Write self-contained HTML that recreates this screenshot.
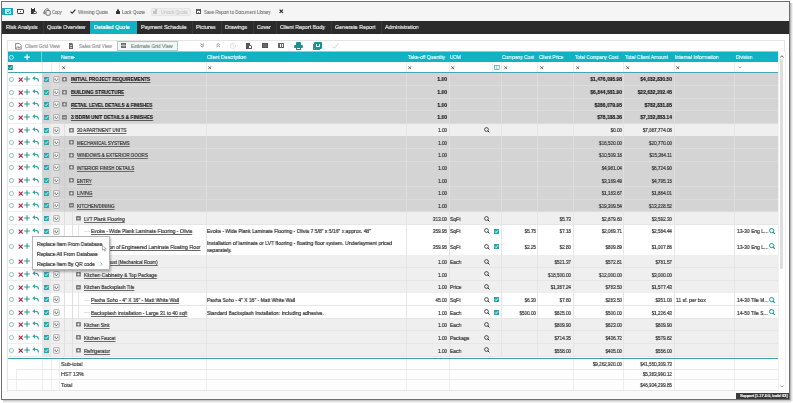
<!DOCTYPE html><html><head><meta charset="utf-8"><style>
html,body{margin:0;padding:0;background:#fff;width:793px;height:403px;overflow:hidden;position:relative;font-family:"Liberation Sans",sans-serif}
div{position:absolute;box-sizing:border-box}
.t{white-space:nowrap;line-height:8px;height:8px;will-change:transform;-webkit-text-stroke:0.22px currentColor}
svg{position:absolute;overflow:visible}
</style></head><body>
<div style="left:790px;top:3px;width:3px;height:398px;background:linear-gradient(90deg,#a8a8a8,#e6e6e6 60%,#fafafa)"></div>
<div style="left:3px;top:400px;width:788px;height:3px;background:linear-gradient(180deg,#bdbdbd,#e8e8e8 60%,#fafafa)"></div>
<div style="left:1px;top:1px;width:789px;height:399px;border:1px solid #6f6f6f;background:#fff"></div>
<div style="left:2px;top:2px;width:787px;height:19.5px;background:#f5f5f5"></div>
<div style="left:2px;top:21.2px;width:787px;height:12.6px;background:#2b2b2b"></div>
<div style="left:2px;top:8px;width:11.4px;height:7.1px;background:#17a9b5"></div>
<div style="left:5.2px;top:9.2px;width:5.6px;height:4.6px;background:#8ff0f6;border:0.5px solid #c9fbff"></div>
<svg style="left:5.6px;top:9.6px" width="5" height="4" viewBox="0 0 5 4"><path d="M0.9 1.8 L2.3 3.2 L4.4 0.6" stroke="#0f8c98" stroke-width="1" fill="none"/></svg>
<div style="left:16.9px;top:8.8px;width:6.8px;height:5.1px;border:0.9px solid #333;border-radius:1.2px;background:#fff"></div>
<div style="left:17.4px;top:9.2px;width:5.8px;height:1.3px;background:#444"></div>
<div style="left:19.8px;top:11.1px;width:1.3px;height:1.2px;background:#222;border-radius:1px"></div>
<div style="left:30.8px;top:8.3px;width:3.8px;height:5.8px;background:#333;border-radius:0.5px"></div>
<div style="left:32.0px;top:8.0px;width:1.6px;height:1.0px;background:#fff"></div>
<div style="left:32.9px;top:10.6px;width:4.1px;height:3.9px;border:0.8px solid #444;background:#fff;border-radius:0 1.8px 1.5px 1.5px"></div>
<svg style="left:43px;top:7.6px" width="8" height="8" viewBox="0 0 8 8"><rect x="2.9" y="2.6" width="4.3" height="4.6" rx="1" fill="none" stroke="#555" stroke-width="0.85"/><path d="M1.1 5.6 Q0.4 2.0 3.6 0.9 Q5.2 0.5 5.9 1.6" stroke="#555" stroke-width="0.85" fill="none"/><path d="M0.6 4.3 L1.2 6.0 L2.5 4.9" stroke="#555" stroke-width="0.7" fill="none"/></svg>
<div class="t" style="left:52px;top:8.094px;font-size:5.5px;color:#6a6a6a;font-weight:normal;transform:scaleX(0.757);transform-origin:0 0;-webkit-text-stroke:0.08px currentColor">Copy</div>
<svg style="left:69.8px;top:9.2px" width="6" height="5" viewBox="0 0 6 5"><path d="M0.5 2.6 L2.2 4.2 L5.4 0.6" stroke="#333" stroke-width="1.2" fill="none"/></svg>
<div class="t" style="left:77.8px;top:8.094px;font-size:5.5px;color:#6a6a6a;font-weight:normal;transform:scaleX(0.827);transform-origin:0 0;-webkit-text-stroke:0.08px currentColor">Winning Quote</div>
<div style="left:116.1px;top:11px;width:4px;height:3.4px;background:#333;border-radius:0.5px"></div>
<div style="left:116.8px;top:8.7px;width:2.6px;height:3.4px;border:0.8px solid #333;border-radius:1.5px 1.5px 0 0"></div>
<div class="t" style="left:122.2px;top:8.094px;font-size:5.5px;color:#6a6a6a;font-weight:normal;transform:scaleX(0.826);transform-origin:0 0;-webkit-text-stroke:0.08px currentColor">Lock Quote</div>
<div style="left:151px;top:7.6px;width:39.5px;height:8.8px;background:#eeeeee;border-radius:2px;border:0.8px solid #e6e6e6"></div>
<div style="left:153.3px;top:11.2px;width:3.8px;height:3.2px;background:#c4c4c4"></div>
<div style="left:154.6px;top:9px;width:2.6px;height:2.8px;border:0.7px solid #c4c4c4;border-radius:1.5px 1.5px 0 0;border-bottom:none"></div>
<div class="t" style="left:160.8px;top:8.094px;font-size:5.5px;color:#c2c2c2;font-weight:normal;transform:scaleX(0.8);transform-origin:0 0;-webkit-text-stroke:0.08px currentColor">Unlock Quote</div>
<div style="left:196px;top:8.6px;width:5px;height:5.6px;border:0.9px solid #555;background:#fff"></div>
<div style="left:197.2px;top:9px;width:2.6px;height:1.8px;background:#666"></div>
<div style="left:197.6px;top:12px;width:1.8px;height:1.4px;background:#888"></div>
<div class="t" style="left:203.5px;top:8.094px;font-size:5.5px;color:#6a6a6a;font-weight:normal;transform:scaleX(0.817);transform-origin:0 0;-webkit-text-stroke:0.08px currentColor">Save Report to Document Library</div>
<svg style="left:278.6px;top:9.4px" width="5" height="5" viewBox="0 0 5 5"><path d="M0.6 0.6 L3.9 3.9 M3.9 0.6 L0.6 3.9" stroke="#222" stroke-width="1.1"/></svg>
<div style="left:90.4px;top:21.4px;width:46.5px;height:12.4px;background:#10b2c4"></div>
<div style="left:43px;top:21.4px;width:0.8px;height:12.4px;background:#383838"></div>
<div class="t" style="left:5.8px;top:23.156px;font-size:5.9px;color:#e6e6e6;font-weight:normal;transform:scaleX(0.912);transform-origin:0 0;">Risk Analysis</div>
<div class="t" style="left:46.7px;top:23.156px;font-size:5.9px;color:#e6e6e6;font-weight:normal;transform:scaleX(0.907);transform-origin:0 0;">Quote Overview</div>
<div class="t" style="left:94.3px;top:23.156px;font-size:5.9px;color:#ffffff;font-weight:normal;transform:scaleX(0.913);transform-origin:0 0;">Detailed Quote</div>
<div style="left:192.4px;top:21.4px;width:0.8px;height:12.4px;background:#383838"></div>
<div class="t" style="left:140.7px;top:23.156px;font-size:5.9px;color:#e6e6e6;font-weight:normal;transform:scaleX(0.922);transform-origin:0 0;">Payment Schedule</div>
<div style="left:221px;top:21.4px;width:0.8px;height:12.4px;background:#383838"></div>
<div class="t" style="left:195.6px;top:23.156px;font-size:5.9px;color:#e6e6e6;font-weight:normal;transform:scaleX(0.924);transform-origin:0 0;">Pictures</div>
<div style="left:252.9px;top:21.4px;width:0.8px;height:12.4px;background:#383838"></div>
<div class="t" style="left:224.9px;top:23.156px;font-size:5.9px;color:#e6e6e6;font-weight:normal;transform:scaleX(0.904);transform-origin:0 0;">Drawings</div>
<div style="left:276.2px;top:21.4px;width:0.8px;height:12.4px;background:#383838"></div>
<div class="t" style="left:256.7px;top:23.156px;font-size:5.9px;color:#e6e6e6;font-weight:normal;transform:scaleX(0.871);transform-origin:0 0;">Cover</div>
<div style="left:330.8px;top:21.4px;width:0.8px;height:12.4px;background:#383838"></div>
<div class="t" style="left:280.4px;top:23.156px;font-size:5.9px;color:#e6e6e6;font-weight:normal;transform:scaleX(0.908);transform-origin:0 0;">Client Report Body</div>
<div style="left:381px;top:21.4px;width:0.8px;height:12.4px;background:#383838"></div>
<div class="t" style="left:335.2px;top:23.156px;font-size:5.9px;color:#e6e6e6;font-weight:normal;transform:scaleX(0.921);transform-origin:0 0;">Generate Report</div>
<div class="t" style="left:385.2px;top:23.156px;font-size:5.9px;color:#e6e6e6;font-weight:normal;transform:scaleX(0.906);transform-origin:0 0;">Administration</div>
<div style="left:7.2px;top:40.2px;width:778px;height:11.4px;border-top:0.8px solid #e4e4e4;border-left:0.8px solid #e4e4e4;border-right:0.8px solid #e4e4e4;background:#fff"></div>
<svg style="left:14.6px;top:42.6px" width="7" height="7" viewBox="0 0 7 7"><path d="M0.6 0.5 H4.2 L6.2 2.5 V6.2 H0.6 Z" fill="#fff" stroke="#666" stroke-width="0.75"/><path d="M1.2 5.6 L2.8 3.6 L4.2 4.9 L5.6 3.9" stroke="#555" stroke-width="0.8" fill="none"/></svg>
<div class="t" style="left:25.3px;top:41.994px;font-size:5.5px;color:#9a9a9a;font-weight:normal;transform:scaleX(0.89);transform-origin:0 0;">Client Grid View</div>
<div style="left:68.6px;top:43px;width:4.6px;height:5.8px;background:#666;border-radius:0 1.5px 0 0"></div>
<div style="left:69.6px;top:45.2px;width:2.6px;height:0.6px;background:#ccc"></div>
<div style="left:69.6px;top:46.6px;width:2.6px;height:0.6px;background:#ccc"></div>
<div class="t" style="left:79.2px;top:41.994px;font-size:5.5px;color:#9a9a9a;font-weight:normal;transform:scaleX(0.839);transform-origin:0 0;">Sales Grid View</div>
<div style="left:117.4px;top:40.8px;width:60.6px;height:10.6px;border:0.9px solid #a9cbc2;background:#f2f7f6"></div>
<div style="left:120.6px;top:43.2px;width:5.9px;height:5.2px;background:#8c8c8c;border:0.6px solid #6c6c6c"></div>
<div style="left:121.4px;top:44.8px;width:4.3px;height:0.5px;background:#bbb"></div>
<div class="t" style="left:131.2px;top:41.994px;font-size:5.5px;color:#8c8c8c;font-weight:normal;transform:scaleX(0.892);transform-origin:0 0;">Estimate Grid View</div>
<svg style="left:199.6px;top:43.3px" width="5" height="5" viewBox="0 0 5 5"><path d="M0.5 0.5 L2.2 2 L3.9 0.5 M0.5 2.5 L2.2 4 L3.9 2.5" stroke="#777" stroke-width="0.9" fill="none"/></svg>
<svg style="left:215.8px;top:43.3px" width="5" height="5" viewBox="0 0 5 5"><path d="M0.5 4 L2.2 2.5 L3.9 4 M0.5 2 L2.2 0.5 L3.9 2" stroke="#888" stroke-width="0.9" fill="none"/></svg>
<svg style="left:230.4px;top:42.6px" width="6" height="6" viewBox="0 0 6 6"><circle cx="3" cy="3" r="2.5" fill="none" stroke="#d8d8d8" stroke-width="0.8"/><path d="M3 1.5 L3 3 L4.2 3.8" stroke="#d8d8d8" stroke-width="0.7" fill="none"/></svg>
<div style="left:246.2px;top:43px;width:3.5px;height:5.6px;background:#555"></div>
<div style="left:248.2px;top:45px;width:3.8px;height:4px;border:0.8px solid #555;background:#fff;border-radius:0 1.2px 0 0"></div>
<div style="left:262px;top:43.3px;width:6px;height:5.2px;border:0.9px solid #555;border-top-width:1.6px;background:#6a6a6a"></div>
<div style="left:277.5px;top:43.3px;width:6px;height:5.2px;border:0.9px solid #666;border-top-width:1.6px;background:repeating-linear-gradient(90deg,#666 0 0.8px,#fff 0.8px 2px)"></div>
<div style="left:294px;top:44.6px;width:8.8px;height:3.8px;background:#16928f;border-radius:1.2px"></div>
<div style="left:295.8px;top:42.4px;width:5.2px;height:2.4px;background:#16928f;border-radius:1px 1px 0 0"></div>
<div style="left:296.2px;top:47.2px;width:4.4px;height:2.6px;background:#fff;border:0.8px solid #16928f"></div>
<div style="left:313px;top:43.6px;width:6.5px;height:6.8px;border-left:0.8px solid #777;border-bottom:0.8px solid #777"></div>
<div style="left:314.4px;top:42px;width:7.6px;height:7px;background:#169494;border-radius:1px"></div>
<div style="left:316px;top:44.2px;width:4.4px;height:2.8px;border:0.8px solid #dff;border-top:none"></div>
<svg style="left:332px;top:43px" width="7" height="6" viewBox="0 0 7 6"><path d="M0.5 3.5 L2.3 5.2 L6.3 0.6" stroke="#ccc" stroke-width="0.9" fill="none"/></svg>
<div style="left:8px;top:52px;width:769.6px;height:9.6px;background:#10b2c4"></div>
<div style="left:8px;top:51px;width:769.6px;height:1px;background:rgba(16,178,196,0.55)"></div>
<div style="left:41.2px;top:52px;width:0.8px;height:10px;background:#6ad8e3"></div>
<svg style="left:9.3px;top:54.8px" width="5" height="5" viewBox="0 0 5 5"><circle cx="2.4" cy="2.4" r="2" fill="none" stroke="#d5fbff" stroke-width="0.8"/></svg>
<svg style="left:23.9px;top:53.6px" width="7" height="7" viewBox="0 0 7 7"><path d="M3.1 0.2 V6 M0.2 3.1 H6" stroke="#f4ffff" stroke-width="1.2"/></svg>
<div class="t" style="left:60.8px;top:53.025px;font-size:5.7px;color:#e4fcff;font-weight:normal;transform:scaleX(0.856);transform-origin:0 0;-webkit-text-stroke:0.2px #e4fcff">Name</div>
<div class="t" style="left:207px;top:53.025px;font-size:5.7px;color:#e4fcff;font-weight:normal;transform:scaleX(0.876);transform-origin:0 0;-webkit-text-stroke:0.2px #e4fcff">Client Description</div>
<div class="t" style="left:407.7px;top:53.025px;font-size:5.7px;color:#e4fcff;font-weight:normal;transform:scaleX(0.867);transform-origin:0 0;-webkit-text-stroke:0.2px #e4fcff">Take-off Quantity</div>
<div class="t" style="left:450.2px;top:53.025px;font-size:5.7px;color:#e4fcff;font-weight:normal;transform:scaleX(0.823);transform-origin:0 0;-webkit-text-stroke:0.2px #e4fcff">UOM</div>
<div class="t" style="left:502.2px;top:53.025px;font-size:5.7px;color:#e4fcff;font-weight:normal;transform:scaleX(0.853);transform-origin:0 0;-webkit-text-stroke:0.2px #e4fcff">Company Cost</div>
<div class="t" style="left:538.6px;top:53.025px;font-size:5.7px;color:#e4fcff;font-weight:normal;transform:scaleX(0.838);transform-origin:0 0;-webkit-text-stroke:0.2px #e4fcff">Client Price</div>
<div class="t" style="left:574.6px;top:53.025px;font-size:5.7px;color:#e4fcff;font-weight:normal;transform:scaleX(0.847);transform-origin:0 0;-webkit-text-stroke:0.2px #e4fcff">Total Company Cost</div>
<div class="t" style="left:625px;top:53.025px;font-size:5.7px;color:#e4fcff;font-weight:normal;transform:scaleX(0.878);transform-origin:0 0;-webkit-text-stroke:0.2px #e4fcff">Total Client Amount</div>
<div class="t" style="left:674.8px;top:53.025px;font-size:5.7px;color:#e4fcff;font-weight:normal;transform:scaleX(0.891);transform-origin:0 0;-webkit-text-stroke:0.2px #e4fcff">Internal Information</div>
<div class="t" style="left:736px;top:53.025px;font-size:5.7px;color:#e4fcff;font-weight:normal;transform:scaleX(0.821);transform-origin:0 0;-webkit-text-stroke:0.2px #e4fcff">Division</div>
<div style="left:73.4px;top:57.0px;width:1.9px;height:0.8px;background:#e4fcff"></div>
<div style="left:8px;top:61.5px;width:769.6px;height:10.8px;background:#fff"></div>
<div style="left:41.5px;top:61.5px;width:0.7px;height:10.8px;background:#ececec"></div>
<div style="left:50.6px;top:61.5px;width:0.7px;height:10.8px;background:#ececec"></div>
<div style="left:59.3px;top:61.5px;width:0.7px;height:10.8px;background:#ececec"></div>
<div style="left:205.5px;top:61.5px;width:0.7px;height:10.8px;background:#ececec"></div>
<div style="left:405.9px;top:61.5px;width:0.7px;height:10.8px;background:#ececec"></div>
<div style="left:448.7px;top:61.5px;width:0.7px;height:10.8px;background:#ececec"></div>
<div style="left:492.3px;top:61.5px;width:0.7px;height:10.8px;background:#ececec"></div>
<div style="left:501px;top:61.5px;width:0.7px;height:10.8px;background:#ececec"></div>
<div style="left:537.4px;top:61.5px;width:0.7px;height:10.8px;background:#ececec"></div>
<div style="left:572.5px;top:61.5px;width:0.7px;height:10.8px;background:#ececec"></div>
<div style="left:623.1px;top:61.5px;width:0.7px;height:10.8px;background:#ececec"></div>
<div style="left:673.8px;top:61.5px;width:0.7px;height:10.8px;background:#ececec"></div>
<div style="left:734.2px;top:61.5px;width:0.7px;height:10.8px;background:#ececec"></div>
<svg style="left:8.4px;top:64.9px" width="5" height="5" viewBox="0 0 5 5"><rect x="0" y="0" width="4.8" height="5" fill="#178f96"/><path d="M1.0 2.5 L2.1 3.6 L4.0 1.3" stroke="#bff8ff" stroke-width="0.9" fill="none"/></svg>
<svg style="left:62.3px;top:65.6px" width="4" height="4" viewBox="0 0 4 4"><path d="M0.3 0.3 L3.1 3.1 M3.1 0.3 L0.3 3.1" stroke="#444" stroke-width="0.8"/></svg>
<svg style="left:207.9px;top:65.6px" width="4" height="4" viewBox="0 0 4 4"><path d="M0.3 0.3 L3.1 3.1 M3.1 0.3 L0.3 3.1" stroke="#444" stroke-width="0.8"/></svg>
<svg style="left:407.9px;top:65.6px" width="4" height="4" viewBox="0 0 4 4"><path d="M0.3 0.3 L3.1 3.1 M3.1 0.3 L0.3 3.1" stroke="#444" stroke-width="0.8"/></svg>
<svg style="left:450.9px;top:65.6px" width="4" height="4" viewBox="0 0 4 4"><path d="M0.3 0.3 L3.1 3.1 M3.1 0.3 L0.3 3.1" stroke="#444" stroke-width="0.8"/></svg>
<svg style="left:503.6px;top:65.6px" width="4" height="4" viewBox="0 0 4 4"><path d="M0.3 0.3 L3.1 3.1 M3.1 0.3 L0.3 3.1" stroke="#444" stroke-width="0.8"/></svg>
<svg style="left:539.9px;top:65.6px" width="4" height="4" viewBox="0 0 4 4"><path d="M0.3 0.3 L3.1 3.1 M3.1 0.3 L0.3 3.1" stroke="#444" stroke-width="0.8"/></svg>
<svg style="left:575.9px;top:65.6px" width="4" height="4" viewBox="0 0 4 4"><path d="M0.3 0.3 L3.1 3.1 M3.1 0.3 L0.3 3.1" stroke="#444" stroke-width="0.8"/></svg>
<svg style="left:626.2px;top:65.6px" width="4" height="4" viewBox="0 0 4 4"><path d="M0.3 0.3 L3.1 3.1 M3.1 0.3 L0.3 3.1" stroke="#444" stroke-width="0.8"/></svg>
<svg style="left:675.9px;top:65.6px" width="4" height="4" viewBox="0 0 4 4"><path d="M0.3 0.3 L3.1 3.1 M3.1 0.3 L0.3 3.1" stroke="#444" stroke-width="0.8"/></svg>
<svg style="left:494px;top:65.2px" width="6" height="5" viewBox="0 0 6 5"><rect x="0.4" y="0.4" width="4.8" height="4" fill="none" stroke="#3aa" stroke-width="0.7"/><path d="M2.8 0.4 V4.4" stroke="#3aa" stroke-width="0.6"/></svg>
<svg style="left:737.5px;top:65.6px" width="4" height="3" viewBox="0 0 4 3"><path d="M0.3 0.5 L1.8 2 L3.3 0.5" stroke="#666" stroke-width="0.6" fill="none"/></svg>
<div style="left:8px;top:72.3px;width:769.6px;height:1px;background:#4aa3b0"></div>
<div style="left:777.6px;top:52px;width:7.4px;height:339px;background:#fff"></div>
<svg style="left:779.6px;top:54.6px" width="4" height="3" viewBox="0 0 4 3"><path d="M0.3 2.5 L1.9 0.7 L3.5 2.5" stroke="#444" stroke-width="0.85" fill="none"/></svg>
<div style="left:780.2px;top:59.2px;width:2.8px;height:210.3px;background:#dedede;border-radius:1px"></div>
<div style="left:777.6px;top:52px;width:0.7px;height:339px;background:#f0f0f0"></div>
<div style="left:785px;top:52px;width:0.7px;height:339px;background:#f0f0f0"></div>
<svg style="left:779.7px;top:385.2px" width="4" height="3" viewBox="0 0 4 3"><path d="M0.3 0.5 L1.9 2.1 L3.5 0.5" stroke="#777" stroke-width="0.7" fill="none"/></svg>
<div style="left:8px;top:73.3px;width:33.5px;height:12.62px;background:#fff"></div>
<div style="left:41.5px;top:73.3px;width:736.1px;height:12.62px;background:#d4d4d4"></div>
<div style="left:50.6px;top:73.3px;width:8.7px;height:12.62px;background:#dcdcdc"></div>
<div style="left:8px;top:85.22px;width:33.5px;height:0.7px;background:#eeeeee"></div>
<div style="left:41.5px;top:85.22px;width:736.1px;height:0.7px;background:#dcdcdc"></div>
<div style="left:205.5px;top:73.3px;width:0.7px;height:12.62px;background:#dedede"></div>
<div style="left:405.9px;top:73.3px;width:0.7px;height:12.62px;background:#dedede"></div>
<div style="left:448.7px;top:73.3px;width:0.7px;height:12.62px;background:#dedede"></div>
<div style="left:501px;top:73.3px;width:0.7px;height:12.62px;background:#dedede"></div>
<div style="left:537.4px;top:73.3px;width:0.7px;height:12.62px;background:#dedede"></div>
<div style="left:572.5px;top:73.3px;width:0.7px;height:12.62px;background:#dedede"></div>
<div style="left:623.1px;top:73.3px;width:0.7px;height:12.62px;background:#dedede"></div>
<div style="left:673.8px;top:73.3px;width:0.7px;height:12.62px;background:#dedede"></div>
<div style="left:734.2px;top:73.3px;width:0.7px;height:12.62px;background:#dedede"></div>
<svg style="left:9.1px;top:77px" width="6" height="6" viewBox="0 0 6 6"><circle cx="2.5" cy="2.5" r="2.1" fill="none" stroke="#4f9d94" stroke-width="0.6"/></svg>
<svg style="left:17.6px;top:77px" width="6" height="6" viewBox="0 0 6 6"><path d="M0.7 0.7 L4.7 4.7 M4.7 0.7 L0.7 4.7" stroke="#a8173b" stroke-width="1.05"/></svg>
<svg style="left:23.9px;top:76.4px" width="7" height="7" viewBox="0 0 7 7"><path d="M3 0.3 V5.8 M0.2 3.05 H5.8" stroke="#2c9a8b" stroke-width="1.1"/></svg>
<svg style="left:32.3px;top:76.4px" width="7" height="6" viewBox="0 0 7 6"><path d="M2.9 0.2 L0.3 2.3 L2.9 4.4 Z" fill="#2a9f95"/><path d="M2.3 2.3 H3.9 Q6.4 2.3 6.4 5.5" stroke="#2a9f95" stroke-width="1.05" fill="none"/></svg>
<svg style="left:44px;top:76.8px" width="5" height="5" viewBox="0 0 5 5"><rect x="0" y="0" width="4.9" height="5" fill="#22a9ad"/><path d="M1.0 2.5 L2.1 3.6 L4.0 1.3" stroke="#ffffff" stroke-width="0.9" fill="none"/></svg>
<svg style="left:53px;top:76px" width="7" height="7" viewBox="0 0 7 7"><rect x="0.7" y="0.7" width="5.4" height="5.6" rx="0.4" fill="#fff" stroke="#8c8c8c" stroke-width="0.7"/><path d="M2.3 2.4 A1.3 1.3 0 1 0 4.5 2.6" stroke="#3a3a3a" stroke-width="0.75" fill="none"/></svg>
<svg style="left:62.3px;top:77.1px" width="5" height="5" viewBox="0 0 5 5"><rect x="0" y="0" width="4.9" height="4.6" rx="0.6" fill="#7c7c7c"/><path d="M1.2 2.3 H3.7" stroke="#eee" stroke-width="0.8"/><path d="M2.45 1.1 V3.5" stroke="#eee" stroke-width="0.8"/></svg>
<div style="left:59.3px;top:73.3px;width:146px;height:12.62px;overflow:hidden">
<div class="t" style="left:11.4px;top:2.104px;font-size:5.5px;color:#141414;font-weight:bold;transform:scaleX(0.856);transform-origin:0 0;-webkit-text-stroke:0.14px currentColor;text-decoration:underline;text-underline-offset:0.5px;text-decoration-thickness:0.5px;text-decoration-color:#555">INITIAL PROJECT REQUIREMENTS</div>
</div>
<div class="t" style="left:47.3px;top:75.404px;width:400px;text-align:right;font-size:5.5px;color:#141414;font-weight:bold;transform:scaleX(0.899);transform-origin:100% 0;-webkit-text-stroke:0.14px currentColor;">1.00</div>
<div class="t" style="left:221.8px;top:75.404px;width:400px;text-align:right;font-size:5.5px;color:#141414;font-weight:bold;transform:scaleX(0.899);transform-origin:100% 0;-webkit-text-stroke:0.14px currentColor;">$1,476,095.98</div>
<div class="t" style="left:272px;top:75.404px;width:400px;text-align:right;font-size:5.5px;color:#141414;font-weight:bold;transform:scaleX(0.899);transform-origin:100% 0;-webkit-text-stroke:0.14px currentColor;">$4,032,830.50</div>
<div style="left:8px;top:85.92px;width:33.5px;height:12.62px;background:#fff"></div>
<div style="left:41.5px;top:85.92px;width:736.1px;height:12.62px;background:#d4d4d4"></div>
<div style="left:50.6px;top:85.92px;width:8.7px;height:12.62px;background:#dcdcdc"></div>
<div style="left:8px;top:97.84px;width:33.5px;height:0.7px;background:#eeeeee"></div>
<div style="left:41.5px;top:97.84px;width:736.1px;height:0.7px;background:#dcdcdc"></div>
<div style="left:205.5px;top:85.92px;width:0.7px;height:12.62px;background:#dedede"></div>
<div style="left:405.9px;top:85.92px;width:0.7px;height:12.62px;background:#dedede"></div>
<div style="left:448.7px;top:85.92px;width:0.7px;height:12.62px;background:#dedede"></div>
<div style="left:501px;top:85.92px;width:0.7px;height:12.62px;background:#dedede"></div>
<div style="left:537.4px;top:85.92px;width:0.7px;height:12.62px;background:#dedede"></div>
<div style="left:572.5px;top:85.92px;width:0.7px;height:12.62px;background:#dedede"></div>
<div style="left:623.1px;top:85.92px;width:0.7px;height:12.62px;background:#dedede"></div>
<div style="left:673.8px;top:85.92px;width:0.7px;height:12.62px;background:#dedede"></div>
<div style="left:734.2px;top:85.92px;width:0.7px;height:12.62px;background:#dedede"></div>
<svg style="left:9.1px;top:90px" width="6" height="6" viewBox="0 0 6 6"><circle cx="2.5" cy="2.5" r="2.1" fill="none" stroke="#4f9d94" stroke-width="0.6"/></svg>
<svg style="left:17.6px;top:90px" width="6" height="6" viewBox="0 0 6 6"><path d="M0.7 0.7 L4.7 4.7 M4.7 0.7 L0.7 4.7" stroke="#a8173b" stroke-width="1.05"/></svg>
<svg style="left:23.9px;top:89.4px" width="7" height="7" viewBox="0 0 7 7"><path d="M3 0.3 V5.8 M0.2 3.05 H5.8" stroke="#2c9a8b" stroke-width="1.1"/></svg>
<svg style="left:32.3px;top:89.4px" width="7" height="6" viewBox="0 0 7 6"><path d="M2.9 0.2 L0.3 2.3 L2.9 4.4 Z" fill="#2a9f95"/><path d="M2.3 2.3 H3.9 Q6.4 2.3 6.4 5.5" stroke="#2a9f95" stroke-width="1.05" fill="none"/></svg>
<svg style="left:44px;top:89.8px" width="5" height="5" viewBox="0 0 5 5"><rect x="0" y="0" width="4.9" height="5" fill="#22a9ad"/><path d="M1.0 2.5 L2.1 3.6 L4.0 1.3" stroke="#ffffff" stroke-width="0.9" fill="none"/></svg>
<svg style="left:53px;top:89px" width="7" height="7" viewBox="0 0 7 7"><rect x="0.7" y="0.7" width="5.4" height="5.6" rx="0.4" fill="#fff" stroke="#8c8c8c" stroke-width="0.7"/><path d="M2.3 2.4 A1.3 1.3 0 1 0 4.5 2.6" stroke="#3a3a3a" stroke-width="0.75" fill="none"/></svg>
<svg style="left:62.3px;top:90.1px" width="5" height="5" viewBox="0 0 5 5"><rect x="0" y="0" width="4.9" height="4.6" rx="0.6" fill="#7c7c7c"/><path d="M1.2 2.3 H3.7" stroke="#eee" stroke-width="0.8"/><path d="M2.45 1.1 V3.5" stroke="#eee" stroke-width="0.8"/></svg>
<div style="left:59.3px;top:85.92px;width:146px;height:12.62px;overflow:hidden">
<div class="t" style="left:11.4px;top:2.144px;font-size:5.5px;color:#141414;font-weight:bold;transform:scaleX(0.857);transform-origin:0 0;-webkit-text-stroke:0.14px currentColor;text-decoration:underline;text-underline-offset:0.5px;text-decoration-thickness:0.5px;text-decoration-color:#555">BUILDING STRUCTURE</div>
</div>
<div class="t" style="left:47.3px;top:88.064px;width:400px;text-align:right;font-size:5.5px;color:#141414;font-weight:bold;transform:scaleX(0.899);transform-origin:100% 0;-webkit-text-stroke:0.14px currentColor;">1.00</div>
<div class="t" style="left:221.8px;top:88.064px;width:400px;text-align:right;font-size:5.5px;color:#141414;font-weight:bold;transform:scaleX(0.899);transform-origin:100% 0;-webkit-text-stroke:0.14px currentColor;">$6,844,581.90</div>
<div class="t" style="left:272px;top:88.064px;width:400px;text-align:right;font-size:5.5px;color:#141414;font-weight:bold;transform:scaleX(0.899);transform-origin:100% 0;-webkit-text-stroke:0.14px currentColor;">$22,632,202.45</div>
<div style="left:8px;top:98.54px;width:33.5px;height:12.62px;background:#fff"></div>
<div style="left:41.5px;top:98.54px;width:736.1px;height:12.62px;background:#d4d4d4"></div>
<div style="left:50.6px;top:98.54px;width:8.7px;height:12.62px;background:#dcdcdc"></div>
<div style="left:8px;top:110.46px;width:33.5px;height:0.7px;background:#eeeeee"></div>
<div style="left:41.5px;top:110.46px;width:736.1px;height:0.7px;background:#dcdcdc"></div>
<div style="left:205.5px;top:98.54px;width:0.7px;height:12.62px;background:#dedede"></div>
<div style="left:405.9px;top:98.54px;width:0.7px;height:12.62px;background:#dedede"></div>
<div style="left:448.7px;top:98.54px;width:0.7px;height:12.62px;background:#dedede"></div>
<div style="left:501px;top:98.54px;width:0.7px;height:12.62px;background:#dedede"></div>
<div style="left:537.4px;top:98.54px;width:0.7px;height:12.62px;background:#dedede"></div>
<div style="left:572.5px;top:98.54px;width:0.7px;height:12.62px;background:#dedede"></div>
<div style="left:623.1px;top:98.54px;width:0.7px;height:12.62px;background:#dedede"></div>
<div style="left:673.8px;top:98.54px;width:0.7px;height:12.62px;background:#dedede"></div>
<div style="left:734.2px;top:98.54px;width:0.7px;height:12.62px;background:#dedede"></div>
<svg style="left:9.1px;top:102px" width="6" height="6" viewBox="0 0 6 6"><circle cx="2.5" cy="2.5" r="2.1" fill="none" stroke="#4f9d94" stroke-width="0.6"/></svg>
<svg style="left:17.6px;top:102px" width="6" height="6" viewBox="0 0 6 6"><path d="M0.7 0.7 L4.7 4.7 M4.7 0.7 L0.7 4.7" stroke="#a8173b" stroke-width="1.05"/></svg>
<svg style="left:23.9px;top:101.4px" width="7" height="7" viewBox="0 0 7 7"><path d="M3 0.3 V5.8 M0.2 3.05 H5.8" stroke="#2c9a8b" stroke-width="1.1"/></svg>
<svg style="left:32.3px;top:101.4px" width="7" height="6" viewBox="0 0 7 6"><path d="M2.9 0.2 L0.3 2.3 L2.9 4.4 Z" fill="#2a9f95"/><path d="M2.3 2.3 H3.9 Q6.4 2.3 6.4 5.5" stroke="#2a9f95" stroke-width="1.05" fill="none"/></svg>
<svg style="left:44px;top:101.8px" width="5" height="5" viewBox="0 0 5 5"><rect x="0" y="0" width="4.9" height="5" fill="#22a9ad"/><path d="M1.0 2.5 L2.1 3.6 L4.0 1.3" stroke="#ffffff" stroke-width="0.9" fill="none"/></svg>
<svg style="left:53px;top:101px" width="7" height="7" viewBox="0 0 7 7"><rect x="0.7" y="0.7" width="5.4" height="5.6" rx="0.4" fill="#fff" stroke="#8c8c8c" stroke-width="0.7"/><path d="M2.3 2.4 A1.3 1.3 0 1 0 4.5 2.6" stroke="#3a3a3a" stroke-width="0.75" fill="none"/></svg>
<svg style="left:62.3px;top:102.1px" width="5" height="5" viewBox="0 0 5 5"><rect x="0" y="0" width="4.9" height="4.6" rx="0.6" fill="#7c7c7c"/><path d="M1.2 2.3 H3.7" stroke="#eee" stroke-width="0.8"/><path d="M2.45 1.1 V3.5" stroke="#eee" stroke-width="0.8"/></svg>
<div style="left:59.3px;top:98.54px;width:146px;height:12.62px;overflow:hidden">
<div class="t" style="left:11.4px;top:2.184px;font-size:5.5px;color:#141414;font-weight:bold;transform:scaleX(0.85);transform-origin:0 0;-webkit-text-stroke:0.14px currentColor;text-decoration:underline;text-underline-offset:0.5px;text-decoration-thickness:0.5px;text-decoration-color:#555">RETAIL LEVEL DETAILS &amp; FINISHES</div>
</div>
<div class="t" style="left:47.3px;top:100.724px;width:400px;text-align:right;font-size:5.5px;color:#141414;font-weight:bold;transform:scaleX(0.899);transform-origin:100% 0;-webkit-text-stroke:0.14px currentColor;">1.00</div>
<div class="t" style="left:221.8px;top:100.724px;width:400px;text-align:right;font-size:5.5px;color:#141414;font-weight:bold;transform:scaleX(0.899);transform-origin:100% 0;-webkit-text-stroke:0.14px currentColor;">$286,079.95</div>
<div class="t" style="left:272px;top:100.724px;width:400px;text-align:right;font-size:5.5px;color:#141414;font-weight:bold;transform:scaleX(0.899);transform-origin:100% 0;-webkit-text-stroke:0.14px currentColor;">$782,831.85</div>
<div style="left:8px;top:111.16px;width:33.5px;height:12.62px;background:#fff"></div>
<div style="left:41.5px;top:111.16px;width:736.1px;height:12.62px;background:#d4d4d4"></div>
<div style="left:50.6px;top:111.16px;width:8.7px;height:12.62px;background:#dcdcdc"></div>
<div style="left:8px;top:123.08px;width:33.5px;height:0.7px;background:#eeeeee"></div>
<div style="left:41.5px;top:123.08px;width:736.1px;height:0.7px;background:#dcdcdc"></div>
<div style="left:205.5px;top:111.16px;width:0.7px;height:12.62px;background:#dedede"></div>
<div style="left:405.9px;top:111.16px;width:0.7px;height:12.62px;background:#dedede"></div>
<div style="left:448.7px;top:111.16px;width:0.7px;height:12.62px;background:#dedede"></div>
<div style="left:501px;top:111.16px;width:0.7px;height:12.62px;background:#dedede"></div>
<div style="left:537.4px;top:111.16px;width:0.7px;height:12.62px;background:#dedede"></div>
<div style="left:572.5px;top:111.16px;width:0.7px;height:12.62px;background:#dedede"></div>
<div style="left:623.1px;top:111.16px;width:0.7px;height:12.62px;background:#dedede"></div>
<div style="left:673.8px;top:111.16px;width:0.7px;height:12.62px;background:#dedede"></div>
<div style="left:734.2px;top:111.16px;width:0.7px;height:12.62px;background:#dedede"></div>
<svg style="left:9.1px;top:115px" width="6" height="6" viewBox="0 0 6 6"><circle cx="2.5" cy="2.5" r="2.1" fill="none" stroke="#4f9d94" stroke-width="0.6"/></svg>
<svg style="left:17.6px;top:115px" width="6" height="6" viewBox="0 0 6 6"><path d="M0.7 0.7 L4.7 4.7 M4.7 0.7 L0.7 4.7" stroke="#a8173b" stroke-width="1.05"/></svg>
<svg style="left:23.9px;top:114.4px" width="7" height="7" viewBox="0 0 7 7"><path d="M3 0.3 V5.8 M0.2 3.05 H5.8" stroke="#2c9a8b" stroke-width="1.1"/></svg>
<svg style="left:32.3px;top:114.4px" width="7" height="6" viewBox="0 0 7 6"><path d="M2.9 0.2 L0.3 2.3 L2.9 4.4 Z" fill="#2a9f95"/><path d="M2.3 2.3 H3.9 Q6.4 2.3 6.4 5.5" stroke="#2a9f95" stroke-width="1.05" fill="none"/></svg>
<svg style="left:44px;top:114.8px" width="5" height="5" viewBox="0 0 5 5"><rect x="0" y="0" width="4.9" height="5" fill="#22a9ad"/><path d="M1.0 2.5 L2.1 3.6 L4.0 1.3" stroke="#ffffff" stroke-width="0.9" fill="none"/></svg>
<svg style="left:53px;top:114px" width="7" height="7" viewBox="0 0 7 7"><rect x="0.7" y="0.7" width="5.4" height="5.6" rx="0.4" fill="#fff" stroke="#8c8c8c" stroke-width="0.7"/><path d="M2.3 2.4 A1.3 1.3 0 1 0 4.5 2.6" stroke="#3a3a3a" stroke-width="0.75" fill="none"/></svg>
<svg style="left:62.3px;top:115.1px" width="5" height="5" viewBox="0 0 5 5"><rect x="0" y="0" width="4.9" height="4.6" rx="0.6" fill="#7c7c7c"/><path d="M1.2 2.3 H3.7" stroke="#eee" stroke-width="0.8"/></svg>
<div style="left:59.3px;top:111.16px;width:146px;height:12.62px;overflow:hidden">
<div class="t" style="left:11.4px;top:2.224px;font-size:5.5px;color:#141414;font-weight:bold;transform:scaleX(0.887);transform-origin:0 0;-webkit-text-stroke:0.14px currentColor;text-decoration:underline;text-underline-offset:0.5px;text-decoration-thickness:0.5px;text-decoration-color:#555">3 BDRM UNIT DETAILS &amp; FINISHES</div>
</div>
<div class="t" style="left:47.3px;top:113.384px;width:400px;text-align:right;font-size:5.5px;color:#141414;font-weight:bold;transform:scaleX(0.899);transform-origin:100% 0;-webkit-text-stroke:0.14px currentColor;">1.00</div>
<div class="t" style="left:221.8px;top:113.384px;width:400px;text-align:right;font-size:5.5px;color:#141414;font-weight:bold;transform:scaleX(0.899);transform-origin:100% 0;-webkit-text-stroke:0.14px currentColor;">$78,188.36</div>
<div class="t" style="left:272px;top:113.384px;width:400px;text-align:right;font-size:5.5px;color:#141414;font-weight:bold;transform:scaleX(0.899);transform-origin:100% 0;-webkit-text-stroke:0.14px currentColor;">$7,152,853.14</div>
<div style="left:8px;top:123.78px;width:33.5px;height:12.62px;background:#fff"></div>
<div style="left:41.5px;top:123.78px;width:736.1px;height:12.62px;background:#efefef"></div>
<div style="left:41.5px;top:123.78px;width:9.1px;height:12.62px;background:#e6e6e6"></div>
<div style="left:8px;top:135.7px;width:33.5px;height:0.7px;background:#eeeeee"></div>
<div style="left:41.5px;top:135.7px;width:736.1px;height:0.7px;background:#e6e6e6"></div>
<div style="left:205.5px;top:123.78px;width:0.7px;height:12.62px;background:#e6e6e6"></div>
<div style="left:405.9px;top:123.78px;width:0.7px;height:12.62px;background:#e6e6e6"></div>
<div style="left:448.7px;top:123.78px;width:0.7px;height:12.62px;background:#e6e6e6"></div>
<div style="left:501px;top:123.78px;width:0.7px;height:12.62px;background:#e6e6e6"></div>
<div style="left:537.4px;top:123.78px;width:0.7px;height:12.62px;background:#e6e6e6"></div>
<div style="left:572.5px;top:123.78px;width:0.7px;height:12.62px;background:#e6e6e6"></div>
<div style="left:623.1px;top:123.78px;width:0.7px;height:12.62px;background:#e6e6e6"></div>
<div style="left:673.8px;top:123.78px;width:0.7px;height:12.62px;background:#e6e6e6"></div>
<div style="left:734.2px;top:123.78px;width:0.7px;height:12.62px;background:#e6e6e6"></div>
<svg style="left:9.1px;top:128px" width="6" height="6" viewBox="0 0 6 6"><circle cx="2.5" cy="2.5" r="2.1" fill="none" stroke="#4f9d94" stroke-width="0.6"/></svg>
<svg style="left:17.6px;top:128px" width="6" height="6" viewBox="0 0 6 6"><path d="M0.7 0.7 L4.7 4.7 M4.7 0.7 L0.7 4.7" stroke="#a8173b" stroke-width="1.05"/></svg>
<svg style="left:23.9px;top:127.4px" width="7" height="7" viewBox="0 0 7 7"><path d="M3 0.3 V5.8 M0.2 3.05 H5.8" stroke="#2c9a8b" stroke-width="1.1"/></svg>
<svg style="left:32.3px;top:127.4px" width="7" height="6" viewBox="0 0 7 6"><path d="M2.9 0.2 L0.3 2.3 L2.9 4.4 Z" fill="#2a9f95"/><path d="M2.3 2.3 H3.9 Q6.4 2.3 6.4 5.5" stroke="#2a9f95" stroke-width="1.05" fill="none"/></svg>
<svg style="left:44px;top:127.8px" width="5" height="5" viewBox="0 0 5 5"><rect x="0" y="0" width="4.9" height="5" fill="#22a9ad"/><path d="M1.0 2.5 L2.1 3.6 L4.0 1.3" stroke="#ffffff" stroke-width="0.9" fill="none"/></svg>
<svg style="left:53px;top:127px" width="7" height="7" viewBox="0 0 7 7"><rect x="0.7" y="0.7" width="5.4" height="5.6" rx="0.4" fill="#fff" stroke="#8c8c8c" stroke-width="0.7"/><path d="M2.3 2.4 A1.3 1.3 0 1 0 4.5 2.6" stroke="#3a3a3a" stroke-width="0.75" fill="none"/></svg>
<div style="left:64.2px;top:123.78px;width:0.6px;height:12.62px;background:#e0e0e0"></div>
<svg style="left:68.8px;top:128.1px" width="5" height="5" viewBox="0 0 5 5"><rect x="0" y="0" width="4.9" height="4.6" rx="0.6" fill="#7c7c7c"/><path d="M1.2 2.3 H3.7" stroke="#eee" stroke-width="0.8"/><path d="M2.45 1.1 V3.5" stroke="#eee" stroke-width="0.8"/></svg>
<div style="left:59.3px;top:123.78px;width:146px;height:12.62px;overflow:hidden">
<div class="t" style="left:17.7px;top:2.195px;font-size:5.7px;color:#3c3c3c;font-weight:normal;transform:scaleX(0.812);transform-origin:0 0;text-decoration:underline;text-underline-offset:0.5px;text-decoration-thickness:0.5px;text-decoration-color:#6a6a6a">30 APARTMENT UNITS</div>
</div>
<div class="t" style="left:47.3px;top:125.975px;width:400px;text-align:right;font-size:5.7px;color:#383838;font-weight:normal;transform:scaleX(0.806);transform-origin:100% 0;">1.00</div>
<svg style="left:484px;top:127.19px" width="6" height="6" viewBox="0 0 6 6"><circle cx="2.5" cy="2.5" r="1.9" fill="none" stroke="#333" stroke-width="0.85"/><path d="M3.8 3.8 L5.4 5.4" stroke="#333" stroke-width="1.0"/></svg>
<div class="t" style="left:221.8px;top:125.975px;width:400px;text-align:right;font-size:5.7px;color:#383838;font-weight:normal;transform:scaleX(0.806);transform-origin:100% 0;">$0.00</div>
<div class="t" style="left:272px;top:125.975px;width:400px;text-align:right;font-size:5.7px;color:#383838;font-weight:normal;transform:scaleX(0.806);transform-origin:100% 0;">$7,087,774.08</div>
<div style="left:8px;top:136.4px;width:33.5px;height:12.62px;background:#fff"></div>
<div style="left:41.5px;top:136.4px;width:736.1px;height:12.62px;background:#d4d4d4"></div>
<div style="left:50.6px;top:136.4px;width:8.7px;height:12.62px;background:#dcdcdc"></div>
<div style="left:8px;top:148.32px;width:33.5px;height:0.7px;background:#eeeeee"></div>
<div style="left:41.5px;top:148.32px;width:736.1px;height:0.7px;background:#dcdcdc"></div>
<div style="left:205.5px;top:136.4px;width:0.7px;height:12.62px;background:#dedede"></div>
<div style="left:405.9px;top:136.4px;width:0.7px;height:12.62px;background:#dedede"></div>
<div style="left:448.7px;top:136.4px;width:0.7px;height:12.62px;background:#dedede"></div>
<div style="left:501px;top:136.4px;width:0.7px;height:12.62px;background:#dedede"></div>
<div style="left:537.4px;top:136.4px;width:0.7px;height:12.62px;background:#dedede"></div>
<div style="left:572.5px;top:136.4px;width:0.7px;height:12.62px;background:#dedede"></div>
<div style="left:623.1px;top:136.4px;width:0.7px;height:12.62px;background:#dedede"></div>
<div style="left:673.8px;top:136.4px;width:0.7px;height:12.62px;background:#dedede"></div>
<div style="left:734.2px;top:136.4px;width:0.7px;height:12.62px;background:#dedede"></div>
<svg style="left:9.1px;top:140px" width="6" height="6" viewBox="0 0 6 6"><circle cx="2.5" cy="2.5" r="2.1" fill="none" stroke="#4f9d94" stroke-width="0.6"/></svg>
<svg style="left:17.6px;top:140px" width="6" height="6" viewBox="0 0 6 6"><path d="M0.7 0.7 L4.7 4.7 M4.7 0.7 L0.7 4.7" stroke="#a8173b" stroke-width="1.05"/></svg>
<svg style="left:23.9px;top:139.4px" width="7" height="7" viewBox="0 0 7 7"><path d="M3 0.3 V5.8 M0.2 3.05 H5.8" stroke="#2c9a8b" stroke-width="1.1"/></svg>
<svg style="left:32.3px;top:139.4px" width="7" height="6" viewBox="0 0 7 6"><path d="M2.9 0.2 L0.3 2.3 L2.9 4.4 Z" fill="#2a9f95"/><path d="M2.3 2.3 H3.9 Q6.4 2.3 6.4 5.5" stroke="#2a9f95" stroke-width="1.05" fill="none"/></svg>
<svg style="left:44px;top:139.8px" width="5" height="5" viewBox="0 0 5 5"><rect x="0" y="0" width="4.9" height="5" fill="#22a9ad"/><path d="M1.0 2.5 L2.1 3.6 L4.0 1.3" stroke="#ffffff" stroke-width="0.9" fill="none"/></svg>
<svg style="left:53px;top:139px" width="7" height="7" viewBox="0 0 7 7"><rect x="0.7" y="0.7" width="5.4" height="5.6" rx="0.4" fill="#fff" stroke="#8c8c8c" stroke-width="0.7"/><path d="M2.3 2.4 A1.3 1.3 0 1 0 4.5 2.6" stroke="#3a3a3a" stroke-width="0.75" fill="none"/></svg>
<div style="left:64.2px;top:136.4px;width:0.6px;height:12.62px;background:#cfcfcf"></div>
<svg style="left:68.8px;top:140.1px" width="5" height="5" viewBox="0 0 5 5"><rect x="0" y="0" width="4.9" height="4.6" rx="0.6" fill="#7c7c7c"/><path d="M1.2 2.3 H3.7" stroke="#eee" stroke-width="0.8"/><path d="M2.45 1.1 V3.5" stroke="#eee" stroke-width="0.8"/></svg>
<div style="left:59.3px;top:136.4px;width:146px;height:12.62px;overflow:hidden">
<div class="t" style="left:17.7px;top:2.235px;font-size:5.7px;color:#3c3c3c;font-weight:normal;transform:scaleX(0.797);transform-origin:0 0;text-decoration:underline;text-underline-offset:0.5px;text-decoration-thickness:0.5px;text-decoration-color:#6a6a6a">MECHANICAL SYSTEMS</div>
</div>
<div class="t" style="left:47.3px;top:138.635px;width:400px;text-align:right;font-size:5.7px;color:#383838;font-weight:normal;transform:scaleX(0.806);transform-origin:100% 0;">1.00</div>
<div class="t" style="left:221.8px;top:138.635px;width:400px;text-align:right;font-size:5.7px;color:#383838;font-weight:normal;transform:scaleX(0.806);transform-origin:100% 0;">$16,520.00</div>
<div class="t" style="left:272px;top:138.635px;width:400px;text-align:right;font-size:5.7px;color:#383838;font-weight:normal;transform:scaleX(0.806);transform-origin:100% 0;">$20,770.00</div>
<div style="left:8px;top:149.02px;width:33.5px;height:12.62px;background:#fff"></div>
<div style="left:41.5px;top:149.02px;width:736.1px;height:12.62px;background:#d4d4d4"></div>
<div style="left:50.6px;top:149.02px;width:8.7px;height:12.62px;background:#dcdcdc"></div>
<div style="left:8px;top:160.94px;width:33.5px;height:0.7px;background:#eeeeee"></div>
<div style="left:41.5px;top:160.94px;width:736.1px;height:0.7px;background:#dcdcdc"></div>
<div style="left:205.5px;top:149.02px;width:0.7px;height:12.62px;background:#dedede"></div>
<div style="left:405.9px;top:149.02px;width:0.7px;height:12.62px;background:#dedede"></div>
<div style="left:448.7px;top:149.02px;width:0.7px;height:12.62px;background:#dedede"></div>
<div style="left:501px;top:149.02px;width:0.7px;height:12.62px;background:#dedede"></div>
<div style="left:537.4px;top:149.02px;width:0.7px;height:12.62px;background:#dedede"></div>
<div style="left:572.5px;top:149.02px;width:0.7px;height:12.62px;background:#dedede"></div>
<div style="left:623.1px;top:149.02px;width:0.7px;height:12.62px;background:#dedede"></div>
<div style="left:673.8px;top:149.02px;width:0.7px;height:12.62px;background:#dedede"></div>
<div style="left:734.2px;top:149.02px;width:0.7px;height:12.62px;background:#dedede"></div>
<svg style="left:9.1px;top:153px" width="6" height="6" viewBox="0 0 6 6"><circle cx="2.5" cy="2.5" r="2.1" fill="none" stroke="#4f9d94" stroke-width="0.6"/></svg>
<svg style="left:17.6px;top:153px" width="6" height="6" viewBox="0 0 6 6"><path d="M0.7 0.7 L4.7 4.7 M4.7 0.7 L0.7 4.7" stroke="#a8173b" stroke-width="1.05"/></svg>
<svg style="left:23.9px;top:152.4px" width="7" height="7" viewBox="0 0 7 7"><path d="M3 0.3 V5.8 M0.2 3.05 H5.8" stroke="#2c9a8b" stroke-width="1.1"/></svg>
<svg style="left:32.3px;top:152.4px" width="7" height="6" viewBox="0 0 7 6"><path d="M2.9 0.2 L0.3 2.3 L2.9 4.4 Z" fill="#2a9f95"/><path d="M2.3 2.3 H3.9 Q6.4 2.3 6.4 5.5" stroke="#2a9f95" stroke-width="1.05" fill="none"/></svg>
<svg style="left:44px;top:152.8px" width="5" height="5" viewBox="0 0 5 5"><rect x="0" y="0" width="4.9" height="5" fill="#22a9ad"/><path d="M1.0 2.5 L2.1 3.6 L4.0 1.3" stroke="#ffffff" stroke-width="0.9" fill="none"/></svg>
<svg style="left:53px;top:152px" width="7" height="7" viewBox="0 0 7 7"><rect x="0.7" y="0.7" width="5.4" height="5.6" rx="0.4" fill="#fff" stroke="#8c8c8c" stroke-width="0.7"/><path d="M2.3 2.4 A1.3 1.3 0 1 0 4.5 2.6" stroke="#3a3a3a" stroke-width="0.75" fill="none"/></svg>
<div style="left:64.2px;top:149.02px;width:0.6px;height:12.62px;background:#cfcfcf"></div>
<svg style="left:68.8px;top:153.1px" width="5" height="5" viewBox="0 0 5 5"><rect x="0" y="0" width="4.9" height="4.6" rx="0.6" fill="#7c7c7c"/><path d="M1.2 2.3 H3.7" stroke="#eee" stroke-width="0.8"/><path d="M2.45 1.1 V3.5" stroke="#eee" stroke-width="0.8"/></svg>
<div style="left:59.3px;top:149.02px;width:146px;height:12.62px;overflow:hidden">
<div class="t" style="left:17.7px;top:2.275px;font-size:5.7px;color:#3c3c3c;font-weight:normal;transform:scaleX(0.813);transform-origin:0 0;text-decoration:underline;text-underline-offset:0.5px;text-decoration-thickness:0.5px;text-decoration-color:#6a6a6a">WINDOWS &amp; EXTERIOR DOORS</div>
</div>
<div class="t" style="left:47.3px;top:151.295px;width:400px;text-align:right;font-size:5.7px;color:#383838;font-weight:normal;transform:scaleX(0.806);transform-origin:100% 0;">1.00</div>
<div class="t" style="left:221.8px;top:151.295px;width:400px;text-align:right;font-size:5.7px;color:#383838;font-weight:normal;transform:scaleX(0.806);transform-origin:100% 0;">$10,509.18</div>
<div class="t" style="left:272px;top:151.295px;width:400px;text-align:right;font-size:5.7px;color:#383838;font-weight:normal;transform:scaleX(0.806);transform-origin:100% 0;">$15,364.11</div>
<div style="left:8px;top:161.64px;width:33.5px;height:12.62px;background:#fff"></div>
<div style="left:41.5px;top:161.64px;width:736.1px;height:12.62px;background:#d4d4d4"></div>
<div style="left:50.6px;top:161.64px;width:8.7px;height:12.62px;background:#dcdcdc"></div>
<div style="left:8px;top:173.56px;width:33.5px;height:0.7px;background:#eeeeee"></div>
<div style="left:41.5px;top:173.56px;width:736.1px;height:0.7px;background:#dcdcdc"></div>
<div style="left:205.5px;top:161.64px;width:0.7px;height:12.62px;background:#dedede"></div>
<div style="left:405.9px;top:161.64px;width:0.7px;height:12.62px;background:#dedede"></div>
<div style="left:448.7px;top:161.64px;width:0.7px;height:12.62px;background:#dedede"></div>
<div style="left:501px;top:161.64px;width:0.7px;height:12.62px;background:#dedede"></div>
<div style="left:537.4px;top:161.64px;width:0.7px;height:12.62px;background:#dedede"></div>
<div style="left:572.5px;top:161.64px;width:0.7px;height:12.62px;background:#dedede"></div>
<div style="left:623.1px;top:161.64px;width:0.7px;height:12.62px;background:#dedede"></div>
<div style="left:673.8px;top:161.64px;width:0.7px;height:12.62px;background:#dedede"></div>
<div style="left:734.2px;top:161.64px;width:0.7px;height:12.62px;background:#dedede"></div>
<svg style="left:9.1px;top:165px" width="6" height="6" viewBox="0 0 6 6"><circle cx="2.5" cy="2.5" r="2.1" fill="none" stroke="#4f9d94" stroke-width="0.6"/></svg>
<svg style="left:17.6px;top:165px" width="6" height="6" viewBox="0 0 6 6"><path d="M0.7 0.7 L4.7 4.7 M4.7 0.7 L0.7 4.7" stroke="#a8173b" stroke-width="1.05"/></svg>
<svg style="left:23.9px;top:164.4px" width="7" height="7" viewBox="0 0 7 7"><path d="M3 0.3 V5.8 M0.2 3.05 H5.8" stroke="#2c9a8b" stroke-width="1.1"/></svg>
<svg style="left:32.3px;top:164.4px" width="7" height="6" viewBox="0 0 7 6"><path d="M2.9 0.2 L0.3 2.3 L2.9 4.4 Z" fill="#2a9f95"/><path d="M2.3 2.3 H3.9 Q6.4 2.3 6.4 5.5" stroke="#2a9f95" stroke-width="1.05" fill="none"/></svg>
<svg style="left:44px;top:164.8px" width="5" height="5" viewBox="0 0 5 5"><rect x="0" y="0" width="4.9" height="5" fill="#22a9ad"/><path d="M1.0 2.5 L2.1 3.6 L4.0 1.3" stroke="#ffffff" stroke-width="0.9" fill="none"/></svg>
<svg style="left:53px;top:164px" width="7" height="7" viewBox="0 0 7 7"><rect x="0.7" y="0.7" width="5.4" height="5.6" rx="0.4" fill="#fff" stroke="#8c8c8c" stroke-width="0.7"/><path d="M2.3 2.4 A1.3 1.3 0 1 0 4.5 2.6" stroke="#3a3a3a" stroke-width="0.75" fill="none"/></svg>
<div style="left:64.2px;top:161.64px;width:0.6px;height:12.62px;background:#cfcfcf"></div>
<svg style="left:68.8px;top:165.1px" width="5" height="5" viewBox="0 0 5 5"><rect x="0" y="0" width="4.9" height="4.6" rx="0.6" fill="#7c7c7c"/><path d="M1.2 2.3 H3.7" stroke="#eee" stroke-width="0.8"/><path d="M2.45 1.1 V3.5" stroke="#eee" stroke-width="0.8"/></svg>
<div style="left:59.3px;top:161.64px;width:146px;height:12.62px;overflow:hidden">
<div class="t" style="left:17.7px;top:2.315px;font-size:5.7px;color:#3c3c3c;font-weight:normal;transform:scaleX(0.792);transform-origin:0 0;text-decoration:underline;text-underline-offset:0.5px;text-decoration-thickness:0.5px;text-decoration-color:#6a6a6a">INTERIOR FINISH DETAILS</div>
</div>
<div class="t" style="left:47.3px;top:163.955px;width:400px;text-align:right;font-size:5.7px;color:#383838;font-weight:normal;transform:scaleX(0.806);transform-origin:100% 0;">1.00</div>
<div class="t" style="left:221.8px;top:163.955px;width:400px;text-align:right;font-size:5.7px;color:#383838;font-weight:normal;transform:scaleX(0.806);transform-origin:100% 0;">$4,981.04</div>
<div class="t" style="left:272px;top:163.955px;width:400px;text-align:right;font-size:5.7px;color:#383838;font-weight:normal;transform:scaleX(0.806);transform-origin:100% 0;">$6,724.90</div>
<div style="left:8px;top:174.26px;width:33.5px;height:12.62px;background:#fff"></div>
<div style="left:41.5px;top:174.26px;width:736.1px;height:12.62px;background:#d4d4d4"></div>
<div style="left:50.6px;top:174.26px;width:8.7px;height:12.62px;background:#dcdcdc"></div>
<div style="left:8px;top:186.18px;width:33.5px;height:0.7px;background:#eeeeee"></div>
<div style="left:41.5px;top:186.18px;width:736.1px;height:0.7px;background:#dcdcdc"></div>
<div style="left:205.5px;top:174.26px;width:0.7px;height:12.62px;background:#dedede"></div>
<div style="left:405.9px;top:174.26px;width:0.7px;height:12.62px;background:#dedede"></div>
<div style="left:448.7px;top:174.26px;width:0.7px;height:12.62px;background:#dedede"></div>
<div style="left:501px;top:174.26px;width:0.7px;height:12.62px;background:#dedede"></div>
<div style="left:537.4px;top:174.26px;width:0.7px;height:12.62px;background:#dedede"></div>
<div style="left:572.5px;top:174.26px;width:0.7px;height:12.62px;background:#dedede"></div>
<div style="left:623.1px;top:174.26px;width:0.7px;height:12.62px;background:#dedede"></div>
<div style="left:673.8px;top:174.26px;width:0.7px;height:12.62px;background:#dedede"></div>
<div style="left:734.2px;top:174.26px;width:0.7px;height:12.62px;background:#dedede"></div>
<svg style="left:9.1px;top:178px" width="6" height="6" viewBox="0 0 6 6"><circle cx="2.5" cy="2.5" r="2.1" fill="none" stroke="#4f9d94" stroke-width="0.6"/></svg>
<svg style="left:17.6px;top:178px" width="6" height="6" viewBox="0 0 6 6"><path d="M0.7 0.7 L4.7 4.7 M4.7 0.7 L0.7 4.7" stroke="#a8173b" stroke-width="1.05"/></svg>
<svg style="left:23.9px;top:177.4px" width="7" height="7" viewBox="0 0 7 7"><path d="M3 0.3 V5.8 M0.2 3.05 H5.8" stroke="#2c9a8b" stroke-width="1.1"/></svg>
<svg style="left:32.3px;top:177.4px" width="7" height="6" viewBox="0 0 7 6"><path d="M2.9 0.2 L0.3 2.3 L2.9 4.4 Z" fill="#2a9f95"/><path d="M2.3 2.3 H3.9 Q6.4 2.3 6.4 5.5" stroke="#2a9f95" stroke-width="1.05" fill="none"/></svg>
<svg style="left:44px;top:177.8px" width="5" height="5" viewBox="0 0 5 5"><rect x="0" y="0" width="4.9" height="5" fill="#22a9ad"/><path d="M1.0 2.5 L2.1 3.6 L4.0 1.3" stroke="#ffffff" stroke-width="0.9" fill="none"/></svg>
<svg style="left:53px;top:177px" width="7" height="7" viewBox="0 0 7 7"><rect x="0.7" y="0.7" width="5.4" height="5.6" rx="0.4" fill="#fff" stroke="#8c8c8c" stroke-width="0.7"/><path d="M2.3 2.4 A1.3 1.3 0 1 0 4.5 2.6" stroke="#3a3a3a" stroke-width="0.75" fill="none"/></svg>
<div style="left:64.2px;top:174.26px;width:0.6px;height:12.62px;background:#cfcfcf"></div>
<svg style="left:68.8px;top:178.1px" width="5" height="5" viewBox="0 0 5 5"><rect x="0" y="0" width="4.9" height="4.6" rx="0.6" fill="#7c7c7c"/><path d="M1.2 2.3 H3.7" stroke="#eee" stroke-width="0.8"/><path d="M2.45 1.1 V3.5" stroke="#eee" stroke-width="0.8"/></svg>
<div style="left:59.3px;top:174.26px;width:146px;height:12.62px;overflow:hidden">
<div class="t" style="left:17.7px;top:2.355px;font-size:5.7px;color:#3c3c3c;font-weight:normal;transform:scaleX(0.765);transform-origin:0 0;text-decoration:underline;text-underline-offset:0.5px;text-decoration-thickness:0.5px;text-decoration-color:#6a6a6a">ENTRY</div>
</div>
<div class="t" style="left:47.3px;top:176.615px;width:400px;text-align:right;font-size:5.7px;color:#383838;font-weight:normal;transform:scaleX(0.806);transform-origin:100% 0;">1.00</div>
<div class="t" style="left:221.8px;top:176.615px;width:400px;text-align:right;font-size:5.7px;color:#383838;font-weight:normal;transform:scaleX(0.806);transform-origin:100% 0;">$3,169.49</div>
<div class="t" style="left:272px;top:176.615px;width:400px;text-align:right;font-size:5.7px;color:#383838;font-weight:normal;transform:scaleX(0.806);transform-origin:100% 0;">$4,795.15</div>
<div style="left:8px;top:186.88px;width:33.5px;height:12.62px;background:#fff"></div>
<div style="left:41.5px;top:186.88px;width:736.1px;height:12.62px;background:#d4d4d4"></div>
<div style="left:50.6px;top:186.88px;width:8.7px;height:12.62px;background:#dcdcdc"></div>
<div style="left:8px;top:198.8px;width:33.5px;height:0.7px;background:#eeeeee"></div>
<div style="left:41.5px;top:198.8px;width:736.1px;height:0.7px;background:#dcdcdc"></div>
<div style="left:205.5px;top:186.88px;width:0.7px;height:12.62px;background:#dedede"></div>
<div style="left:405.9px;top:186.88px;width:0.7px;height:12.62px;background:#dedede"></div>
<div style="left:448.7px;top:186.88px;width:0.7px;height:12.62px;background:#dedede"></div>
<div style="left:501px;top:186.88px;width:0.7px;height:12.62px;background:#dedede"></div>
<div style="left:537.4px;top:186.88px;width:0.7px;height:12.62px;background:#dedede"></div>
<div style="left:572.5px;top:186.88px;width:0.7px;height:12.62px;background:#dedede"></div>
<div style="left:623.1px;top:186.88px;width:0.7px;height:12.62px;background:#dedede"></div>
<div style="left:673.8px;top:186.88px;width:0.7px;height:12.62px;background:#dedede"></div>
<div style="left:734.2px;top:186.88px;width:0.7px;height:12.62px;background:#dedede"></div>
<svg style="left:9.1px;top:191px" width="6" height="6" viewBox="0 0 6 6"><circle cx="2.5" cy="2.5" r="2.1" fill="none" stroke="#4f9d94" stroke-width="0.6"/></svg>
<svg style="left:17.6px;top:191px" width="6" height="6" viewBox="0 0 6 6"><path d="M0.7 0.7 L4.7 4.7 M4.7 0.7 L0.7 4.7" stroke="#a8173b" stroke-width="1.05"/></svg>
<svg style="left:23.9px;top:190.4px" width="7" height="7" viewBox="0 0 7 7"><path d="M3 0.3 V5.8 M0.2 3.05 H5.8" stroke="#2c9a8b" stroke-width="1.1"/></svg>
<svg style="left:32.3px;top:190.4px" width="7" height="6" viewBox="0 0 7 6"><path d="M2.9 0.2 L0.3 2.3 L2.9 4.4 Z" fill="#2a9f95"/><path d="M2.3 2.3 H3.9 Q6.4 2.3 6.4 5.5" stroke="#2a9f95" stroke-width="1.05" fill="none"/></svg>
<svg style="left:44px;top:190.8px" width="5" height="5" viewBox="0 0 5 5"><rect x="0" y="0" width="4.9" height="5" fill="#22a9ad"/><path d="M1.0 2.5 L2.1 3.6 L4.0 1.3" stroke="#ffffff" stroke-width="0.9" fill="none"/></svg>
<svg style="left:53px;top:190px" width="7" height="7" viewBox="0 0 7 7"><rect x="0.7" y="0.7" width="5.4" height="5.6" rx="0.4" fill="#fff" stroke="#8c8c8c" stroke-width="0.7"/><path d="M2.3 2.4 A1.3 1.3 0 1 0 4.5 2.6" stroke="#3a3a3a" stroke-width="0.75" fill="none"/></svg>
<div style="left:64.2px;top:186.88px;width:0.6px;height:12.62px;background:#cfcfcf"></div>
<svg style="left:68.8px;top:191.1px" width="5" height="5" viewBox="0 0 5 5"><rect x="0" y="0" width="4.9" height="4.6" rx="0.6" fill="#7c7c7c"/><path d="M1.2 2.3 H3.7" stroke="#eee" stroke-width="0.8"/><path d="M2.45 1.1 V3.5" stroke="#eee" stroke-width="0.8"/></svg>
<div style="left:59.3px;top:186.88px;width:146px;height:12.62px;overflow:hidden">
<div class="t" style="left:17.7px;top:2.395px;font-size:5.7px;color:#3c3c3c;font-weight:normal;transform:scaleX(0.829);transform-origin:0 0;text-decoration:underline;text-underline-offset:0.5px;text-decoration-thickness:0.5px;text-decoration-color:#6a6a6a">LIVING</div>
</div>
<div class="t" style="left:47.3px;top:189.275px;width:400px;text-align:right;font-size:5.7px;color:#383838;font-weight:normal;transform:scaleX(0.806);transform-origin:100% 0;">1.00</div>
<div class="t" style="left:221.8px;top:189.275px;width:400px;text-align:right;font-size:5.7px;color:#383838;font-weight:normal;transform:scaleX(0.806);transform-origin:100% 0;">$1,183.67</div>
<div class="t" style="left:272px;top:189.275px;width:400px;text-align:right;font-size:5.7px;color:#383838;font-weight:normal;transform:scaleX(0.806);transform-origin:100% 0;">$1,864.01</div>
<div style="left:8px;top:199.5px;width:33.5px;height:12.62px;background:#fff"></div>
<div style="left:41.5px;top:199.5px;width:736.1px;height:12.62px;background:#d4d4d4"></div>
<div style="left:50.6px;top:199.5px;width:8.7px;height:12.62px;background:#dcdcdc"></div>
<div style="left:8px;top:211.42px;width:33.5px;height:0.7px;background:#eeeeee"></div>
<div style="left:41.5px;top:211.42px;width:736.1px;height:0.7px;background:#dcdcdc"></div>
<div style="left:205.5px;top:199.5px;width:0.7px;height:12.62px;background:#dedede"></div>
<div style="left:405.9px;top:199.5px;width:0.7px;height:12.62px;background:#dedede"></div>
<div style="left:448.7px;top:199.5px;width:0.7px;height:12.62px;background:#dedede"></div>
<div style="left:501px;top:199.5px;width:0.7px;height:12.62px;background:#dedede"></div>
<div style="left:537.4px;top:199.5px;width:0.7px;height:12.62px;background:#dedede"></div>
<div style="left:572.5px;top:199.5px;width:0.7px;height:12.62px;background:#dedede"></div>
<div style="left:623.1px;top:199.5px;width:0.7px;height:12.62px;background:#dedede"></div>
<div style="left:673.8px;top:199.5px;width:0.7px;height:12.62px;background:#dedede"></div>
<div style="left:734.2px;top:199.5px;width:0.7px;height:12.62px;background:#dedede"></div>
<svg style="left:9.1px;top:203px" width="6" height="6" viewBox="0 0 6 6"><circle cx="2.5" cy="2.5" r="2.1" fill="none" stroke="#4f9d94" stroke-width="0.6"/></svg>
<svg style="left:17.6px;top:203px" width="6" height="6" viewBox="0 0 6 6"><path d="M0.7 0.7 L4.7 4.7 M4.7 0.7 L0.7 4.7" stroke="#a8173b" stroke-width="1.05"/></svg>
<svg style="left:23.9px;top:202.4px" width="7" height="7" viewBox="0 0 7 7"><path d="M3 0.3 V5.8 M0.2 3.05 H5.8" stroke="#2c9a8b" stroke-width="1.1"/></svg>
<svg style="left:32.3px;top:202.4px" width="7" height="6" viewBox="0 0 7 6"><path d="M2.9 0.2 L0.3 2.3 L2.9 4.4 Z" fill="#2a9f95"/><path d="M2.3 2.3 H3.9 Q6.4 2.3 6.4 5.5" stroke="#2a9f95" stroke-width="1.05" fill="none"/></svg>
<svg style="left:44px;top:202.8px" width="5" height="5" viewBox="0 0 5 5"><rect x="0" y="0" width="4.9" height="5" fill="#22a9ad"/><path d="M1.0 2.5 L2.1 3.6 L4.0 1.3" stroke="#ffffff" stroke-width="0.9" fill="none"/></svg>
<svg style="left:53px;top:202px" width="7" height="7" viewBox="0 0 7 7"><rect x="0.7" y="0.7" width="5.4" height="5.6" rx="0.4" fill="#fff" stroke="#8c8c8c" stroke-width="0.7"/><path d="M2.3 2.4 A1.3 1.3 0 1 0 4.5 2.6" stroke="#3a3a3a" stroke-width="0.75" fill="none"/></svg>
<div style="left:64.2px;top:199.5px;width:0.6px;height:12.62px;background:#cfcfcf"></div>
<svg style="left:68.8px;top:203.1px" width="5" height="5" viewBox="0 0 5 5"><rect x="0" y="0" width="4.9" height="4.6" rx="0.6" fill="#7c7c7c"/><path d="M1.2 2.3 H3.7" stroke="#eee" stroke-width="0.8"/></svg>
<div style="left:59.3px;top:199.5px;width:146px;height:12.62px;overflow:hidden">
<div class="t" style="left:17.7px;top:2.435px;font-size:5.7px;color:#3c3c3c;font-weight:normal;transform:scaleX(0.811);transform-origin:0 0;text-decoration:underline;text-underline-offset:0.5px;text-decoration-thickness:0.5px;text-decoration-color:#6a6a6a">KITCHEN/DINING</div>
</div>
<div class="t" style="left:47.3px;top:201.935px;width:400px;text-align:right;font-size:5.7px;color:#383838;font-weight:normal;transform:scaleX(0.806);transform-origin:100% 0;">1.00</div>
<div class="t" style="left:221.8px;top:201.935px;width:400px;text-align:right;font-size:5.7px;color:#383838;font-weight:normal;transform:scaleX(0.806);transform-origin:100% 0;">$19,309.54</div>
<div class="t" style="left:272px;top:201.935px;width:400px;text-align:right;font-size:5.7px;color:#383838;font-weight:normal;transform:scaleX(0.806);transform-origin:100% 0;">$13,228.52</div>
<div style="left:8px;top:212.12px;width:33.5px;height:12.62px;background:#fff"></div>
<div style="left:41.5px;top:212.12px;width:736.1px;height:12.62px;background:#efefef"></div>
<div style="left:41.5px;top:212.12px;width:9.1px;height:12.62px;background:#e6e6e6"></div>
<div style="left:8px;top:224.04px;width:33.5px;height:0.7px;background:#eeeeee"></div>
<div style="left:41.5px;top:224.04px;width:736.1px;height:0.7px;background:#e6e6e6"></div>
<div style="left:205.5px;top:212.12px;width:0.7px;height:12.62px;background:#e6e6e6"></div>
<div style="left:405.9px;top:212.12px;width:0.7px;height:12.62px;background:#e6e6e6"></div>
<div style="left:448.7px;top:212.12px;width:0.7px;height:12.62px;background:#e6e6e6"></div>
<div style="left:501px;top:212.12px;width:0.7px;height:12.62px;background:#e6e6e6"></div>
<div style="left:537.4px;top:212.12px;width:0.7px;height:12.62px;background:#e6e6e6"></div>
<div style="left:572.5px;top:212.12px;width:0.7px;height:12.62px;background:#e6e6e6"></div>
<div style="left:623.1px;top:212.12px;width:0.7px;height:12.62px;background:#e6e6e6"></div>
<div style="left:673.8px;top:212.12px;width:0.7px;height:12.62px;background:#e6e6e6"></div>
<div style="left:734.2px;top:212.12px;width:0.7px;height:12.62px;background:#e6e6e6"></div>
<svg style="left:9.1px;top:216px" width="6" height="6" viewBox="0 0 6 6"><circle cx="2.5" cy="2.5" r="2.1" fill="none" stroke="#4f9d94" stroke-width="0.6"/></svg>
<svg style="left:17.6px;top:216px" width="6" height="6" viewBox="0 0 6 6"><path d="M0.7 0.7 L4.7 4.7 M4.7 0.7 L0.7 4.7" stroke="#a8173b" stroke-width="1.05"/></svg>
<svg style="left:23.9px;top:215.4px" width="7" height="7" viewBox="0 0 7 7"><path d="M3 0.3 V5.8 M0.2 3.05 H5.8" stroke="#2c9a8b" stroke-width="1.1"/></svg>
<svg style="left:32.3px;top:215.4px" width="7" height="6" viewBox="0 0 7 6"><path d="M2.9 0.2 L0.3 2.3 L2.9 4.4 Z" fill="#2a9f95"/><path d="M2.3 2.3 H3.9 Q6.4 2.3 6.4 5.5" stroke="#2a9f95" stroke-width="1.05" fill="none"/></svg>
<svg style="left:44px;top:215.8px" width="5" height="5" viewBox="0 0 5 5"><rect x="0" y="0" width="4.9" height="5" fill="#22a9ad"/><path d="M1.0 2.5 L2.1 3.6 L4.0 1.3" stroke="#ffffff" stroke-width="0.9" fill="none"/></svg>
<svg style="left:53px;top:215px" width="7" height="7" viewBox="0 0 7 7"><rect x="0.7" y="0.7" width="5.4" height="5.6" rx="0.4" fill="#fff" stroke="#8c8c8c" stroke-width="0.7"/><path d="M2.3 2.4 A1.3 1.3 0 1 0 4.5 2.6" stroke="#3a3a3a" stroke-width="0.75" fill="none"/></svg>
<div style="left:64.2px;top:212.12px;width:0.6px;height:12.62px;background:#e0e0e0"></div>
<div style="left:71.6px;top:212.12px;width:0.6px;height:12.62px;background:#e0e0e0"></div>
<svg style="left:75.8px;top:216.1px" width="5" height="5" viewBox="0 0 5 5"><rect x="0" y="0" width="4.9" height="4.6" rx="0.6" fill="#7c7c7c"/><path d="M1.2 2.3 H3.7" stroke="#eee" stroke-width="0.8"/></svg>
<div style="left:59.3px;top:212.12px;width:146px;height:12.62px;overflow:hidden">
<div class="t" style="left:24.7px;top:2.475px;font-size:5.7px;color:#3c3c3c;font-weight:normal;transform:scaleX(0.852);transform-origin:0 0;text-decoration:underline;text-underline-offset:0.5px;text-decoration-thickness:0.5px;text-decoration-color:#6a6a6a">LVT Plank Flooring</div>
</div>
<div class="t" style="left:47.3px;top:214.595px;width:400px;text-align:right;font-size:5.7px;color:#383838;font-weight:normal;transform:scaleX(0.806);transform-origin:100% 0;">313.00</div>
<div class="t" style="left:450.2px;top:214.595px;font-size:5.7px;color:#383838;font-weight:normal;transform:scaleX(0.873);transform-origin:0 0;">SqFt</div>
<svg style="left:484px;top:215.53px" width="6" height="6" viewBox="0 0 6 6"><circle cx="2.5" cy="2.5" r="1.9" fill="none" stroke="#333" stroke-width="0.85"/><path d="M3.8 3.8 L5.4 5.4" stroke="#333" stroke-width="1.0"/></svg>
<div class="t" style="left:170.7px;top:214.595px;width:400px;text-align:right;font-size:5.7px;color:#383838;font-weight:normal;transform:scaleX(0.806);transform-origin:100% 0;">$5.73</div>
<div class="t" style="left:221.8px;top:214.595px;width:400px;text-align:right;font-size:5.7px;color:#383838;font-weight:normal;transform:scaleX(0.806);transform-origin:100% 0;">$2,879.60</div>
<div class="t" style="left:272px;top:214.595px;width:400px;text-align:right;font-size:5.7px;color:#383838;font-weight:normal;transform:scaleX(0.806);transform-origin:100% 0;">$3,592.30</div>
<div style="left:8px;top:224.74px;width:33.5px;height:12.62px;background:#fff"></div>
<div style="left:41.5px;top:224.74px;width:736.1px;height:12.62px;background:#ffffff"></div>
<div style="left:41.5px;top:224.74px;width:9.1px;height:12.62px;background:#f2f2f2"></div>
<div style="left:8px;top:236.66px;width:33.5px;height:0.7px;background:#eeeeee"></div>
<div style="left:41.5px;top:236.66px;width:736.1px;height:0.7px;background:#e6e6e6"></div>
<div style="left:205.5px;top:224.74px;width:0.7px;height:12.62px;background:#e6e6e6"></div>
<div style="left:405.9px;top:224.74px;width:0.7px;height:12.62px;background:#e6e6e6"></div>
<div style="left:448.7px;top:224.74px;width:0.7px;height:12.62px;background:#e6e6e6"></div>
<div style="left:501px;top:224.74px;width:0.7px;height:12.62px;background:#e6e6e6"></div>
<div style="left:537.4px;top:224.74px;width:0.7px;height:12.62px;background:#e6e6e6"></div>
<div style="left:572.5px;top:224.74px;width:0.7px;height:12.62px;background:#e6e6e6"></div>
<div style="left:623.1px;top:224.74px;width:0.7px;height:12.62px;background:#e6e6e6"></div>
<div style="left:673.8px;top:224.74px;width:0.7px;height:12.62px;background:#e6e6e6"></div>
<div style="left:734.2px;top:224.74px;width:0.7px;height:12.62px;background:#e6e6e6"></div>
<svg style="left:9.1px;top:229px" width="6" height="6" viewBox="0 0 6 6"><circle cx="2.5" cy="2.5" r="2.1" fill="none" stroke="#4f9d94" stroke-width="0.6"/></svg>
<svg style="left:17.6px;top:229px" width="6" height="6" viewBox="0 0 6 6"><path d="M0.7 0.7 L4.7 4.7 M4.7 0.7 L0.7 4.7" stroke="#a8173b" stroke-width="1.05"/></svg>
<svg style="left:23.9px;top:228.4px" width="7" height="7" viewBox="0 0 7 7"><path d="M3 0.3 V5.8 M0.2 3.05 H5.8" stroke="#2c9a8b" stroke-width="1.1"/></svg>
<svg style="left:32.3px;top:228.4px" width="7" height="6" viewBox="0 0 7 6"><path d="M2.9 0.2 L0.3 2.3 L2.9 4.4 Z" fill="#2a9f95"/><path d="M2.3 2.3 H3.9 Q6.4 2.3 6.4 5.5" stroke="#2a9f95" stroke-width="1.05" fill="none"/></svg>
<svg style="left:44px;top:228.8px" width="5" height="5" viewBox="0 0 5 5"><rect x="0" y="0" width="4.9" height="5" fill="#22a9ad"/><path d="M1.0 2.5 L2.1 3.6 L4.0 1.3" stroke="#ffffff" stroke-width="0.9" fill="none"/></svg>
<svg style="left:53px;top:228px" width="7" height="7" viewBox="0 0 7 7"><rect x="0.7" y="0.7" width="5.4" height="5.6" rx="0.4" fill="#fff" stroke="#8c8c8c" stroke-width="0.7"/><path d="M2.3 2.4 A1.3 1.3 0 1 0 4.5 2.6" stroke="#3a3a3a" stroke-width="0.75" fill="none"/></svg>
<div style="left:64.2px;top:224.74px;width:0.6px;height:12.62px;background:#e0e0e0"></div>
<div style="left:71.6px;top:224.74px;width:0.6px;height:12.62px;background:#e0e0e0"></div>
<div style="left:78.4px;top:224.74px;width:0.6px;height:12.62px;background:#e6e6e6"></div>
<div style="left:84px;top:231.05px;width:5.5px;height:0.6px;background:#e6e6e6"></div>
<div style="left:59.3px;top:224.74px;width:146px;height:12.62px;overflow:hidden">
<div class="t" style="left:31.9px;top:2.515px;font-size:5.7px;color:#3c3c3c;font-weight:normal;transform:scaleX(0.873);transform-origin:0 0;text-decoration:underline;text-underline-offset:0.5px;text-decoration-thickness:0.5px;text-decoration-color:#6a6a6a">Evoke - Wide Plank Laminate Flooring - Olivia</div>
</div>
<div class="t" style="left:207px;top:227.255px;font-size:5.7px;color:#383838;font-weight:normal;transform:scaleX(0.881);transform-origin:0 0;">Evoke - Wide Plank Laminate Flooring - Olivia 7 5/8" x 5/16" x approx. 48"</div>
<div class="t" style="left:47.3px;top:227.255px;width:400px;text-align:right;font-size:5.7px;color:#383838;font-weight:normal;transform:scaleX(0.806);transform-origin:100% 0;">359.95</div>
<div class="t" style="left:450.2px;top:227.255px;font-size:5.7px;color:#383838;font-weight:normal;transform:scaleX(0.873);transform-origin:0 0;">SqFt</div>
<svg style="left:484px;top:228.15px" width="6" height="6" viewBox="0 0 6 6"><circle cx="2.5" cy="2.5" r="1.9" fill="none" stroke="#333" stroke-width="0.85"/><path d="M3.8 3.8 L5.4 5.4" stroke="#333" stroke-width="1.0"/></svg>
<svg style="left:494.1px;top:228.55px" width="5" height="5" viewBox="0 0 5 5"><rect x="0" y="0" width="5" height="5" fill="#22a9ad"/><path d="M1.0 2.5 L2.1 3.6 L4.0 1.3" stroke="#ffffff" stroke-width="0.9" fill="none"/></svg>
<div class="t" style="left:135.6px;top:227.255px;width:400px;text-align:right;font-size:5.7px;color:#383838;font-weight:normal;transform:scaleX(0.806);transform-origin:100% 0;">$5.75</div>
<div class="t" style="left:170.7px;top:227.255px;width:400px;text-align:right;font-size:5.7px;color:#383838;font-weight:normal;transform:scaleX(0.806);transform-origin:100% 0;">$7.18</div>
<div class="t" style="left:221.8px;top:227.255px;width:400px;text-align:right;font-size:5.7px;color:#383838;font-weight:normal;transform:scaleX(0.806);transform-origin:100% 0;">$2,069.71</div>
<div class="t" style="left:272px;top:227.255px;width:400px;text-align:right;font-size:5.7px;color:#383838;font-weight:normal;transform:scaleX(0.806);transform-origin:100% 0;">$2,584.44</div>
<div class="t" style="left:736.5px;top:227.255px;font-size:5.7px;color:#383838;font-weight:normal;transform:scaleX(0.873);transform-origin:0 0;">13-30 Eng L...</div>
<svg style="left:769.2px;top:228.05px" width="7" height="7" viewBox="0 0 7 7"><circle cx="2.6" cy="2.6" r="2.1" fill="none" stroke="#16999a" stroke-width="0.95"/><path d="M4.1 4.1 L5.9 5.9" stroke="#16999a" stroke-width="1.15"/></svg>
<div style="left:8px;top:237.36px;width:33.5px;height:18.1px;background:#fff"></div>
<div style="left:41.5px;top:237.36px;width:736.1px;height:18.1px;background:#ffffff"></div>
<div style="left:41.5px;top:237.36px;width:9.1px;height:18.1px;background:#f2f2f2"></div>
<div style="left:8px;top:254.76px;width:33.5px;height:0.7px;background:#eeeeee"></div>
<div style="left:41.5px;top:254.76px;width:736.1px;height:0.7px;background:#e6e6e6"></div>
<div style="left:205.5px;top:237.36px;width:0.7px;height:18.1px;background:#e6e6e6"></div>
<div style="left:405.9px;top:237.36px;width:0.7px;height:18.1px;background:#e6e6e6"></div>
<div style="left:448.7px;top:237.36px;width:0.7px;height:18.1px;background:#e6e6e6"></div>
<div style="left:501px;top:237.36px;width:0.7px;height:18.1px;background:#e6e6e6"></div>
<div style="left:537.4px;top:237.36px;width:0.7px;height:18.1px;background:#e6e6e6"></div>
<div style="left:572.5px;top:237.36px;width:0.7px;height:18.1px;background:#e6e6e6"></div>
<div style="left:623.1px;top:237.36px;width:0.7px;height:18.1px;background:#e6e6e6"></div>
<div style="left:673.8px;top:237.36px;width:0.7px;height:18.1px;background:#e6e6e6"></div>
<div style="left:734.2px;top:237.36px;width:0.7px;height:18.1px;background:#e6e6e6"></div>
<svg style="left:9.1px;top:244px" width="6" height="6" viewBox="0 0 6 6"><circle cx="2.5" cy="2.5" r="2.1" fill="none" stroke="#4f9d94" stroke-width="0.6"/></svg>
<svg style="left:17.6px;top:244px" width="6" height="6" viewBox="0 0 6 6"><path d="M0.7 0.7 L4.7 4.7 M4.7 0.7 L0.7 4.7" stroke="#a8173b" stroke-width="1.05"/></svg>
<svg style="left:23.9px;top:243.4px" width="7" height="7" viewBox="0 0 7 7"><path d="M3 0.3 V5.8 M0.2 3.05 H5.8" stroke="#2c9a8b" stroke-width="1.1"/></svg>
<svg style="left:32.3px;top:243.4px" width="7" height="6" viewBox="0 0 7 6"><path d="M2.9 0.2 L0.3 2.3 L2.9 4.4 Z" fill="#2a9f95"/><path d="M2.3 2.3 H3.9 Q6.4 2.3 6.4 5.5" stroke="#2a9f95" stroke-width="1.05" fill="none"/></svg>
<svg style="left:44px;top:243.8px" width="5" height="5" viewBox="0 0 5 5"><rect x="0" y="0" width="4.9" height="5" fill="#22a9ad"/><path d="M1.0 2.5 L2.1 3.6 L4.0 1.3" stroke="#ffffff" stroke-width="0.9" fill="none"/></svg>
<svg style="left:53px;top:243px" width="7" height="7" viewBox="0 0 7 7"><rect x="0.7" y="0.7" width="5.4" height="5.6" rx="0.4" fill="#fff" stroke="#8c8c8c" stroke-width="0.7"/><path d="M2.3 2.4 A1.3 1.3 0 1 0 4.5 2.6" stroke="#3a3a3a" stroke-width="0.75" fill="none"/></svg>
<div style="left:64.2px;top:237.36px;width:0.6px;height:18.1px;background:#e0e0e0"></div>
<div style="left:71.6px;top:237.36px;width:0.6px;height:18.1px;background:#e0e0e0"></div>
<div style="left:78.4px;top:237.36px;width:0.6px;height:18.1px;background:#e6e6e6"></div>
<div style="left:84px;top:246.41px;width:5.5px;height:0.6px;background:#e6e6e6"></div>
<div style="left:59.3px;top:237.36px;width:146px;height:18.1px;overflow:hidden">
<div class="t" style="left:31.9px;top:5.295px;font-size:5.7px;color:#3c3c3c;font-weight:normal;transform:scaleX(0.873);transform-origin:0 0;text-decoration:underline;text-underline-offset:0.5px;text-decoration-thickness:0.5px;text-decoration-color:#6a6a6a">Installation of Engineered Laminate Floating Floor</div>
</div>
<div class="t" style="left:207px;top:239.96px;font-size:5.7px;color:#383838;line-height:6.6px;height:14px;transform:scaleX(0.898);transform-origin:0 0">Installation of laminate or LVT flooring - floating floor system. Underlayment priced<br>separately.</div>
<div class="t" style="left:47.3px;top:242.655px;width:400px;text-align:right;font-size:5.7px;color:#383838;font-weight:normal;transform:scaleX(0.806);transform-origin:100% 0;">359.95</div>
<div class="t" style="left:450.2px;top:242.655px;font-size:5.7px;color:#383838;font-weight:normal;transform:scaleX(0.873);transform-origin:0 0;">SqFt</div>
<svg style="left:484px;top:243.51px" width="6" height="6" viewBox="0 0 6 6"><circle cx="2.5" cy="2.5" r="1.9" fill="none" stroke="#333" stroke-width="0.85"/><path d="M3.8 3.8 L5.4 5.4" stroke="#333" stroke-width="1.0"/></svg>
<svg style="left:494.1px;top:243.91px" width="5" height="5" viewBox="0 0 5 5"><rect x="0" y="0" width="5" height="5" fill="#22a9ad"/><path d="M1.0 2.5 L2.1 3.6 L4.0 1.3" stroke="#ffffff" stroke-width="0.9" fill="none"/></svg>
<div class="t" style="left:135.6px;top:242.655px;width:400px;text-align:right;font-size:5.7px;color:#383838;font-weight:normal;transform:scaleX(0.806);transform-origin:100% 0;">$2.25</div>
<div class="t" style="left:170.7px;top:242.655px;width:400px;text-align:right;font-size:5.7px;color:#383838;font-weight:normal;transform:scaleX(0.806);transform-origin:100% 0;">$2.80</div>
<div class="t" style="left:221.8px;top:242.655px;width:400px;text-align:right;font-size:5.7px;color:#383838;font-weight:normal;transform:scaleX(0.806);transform-origin:100% 0;">$809.89</div>
<div class="t" style="left:272px;top:242.655px;width:400px;text-align:right;font-size:5.7px;color:#383838;font-weight:normal;transform:scaleX(0.806);transform-origin:100% 0;">$1,007.86</div>
<div class="t" style="left:736.5px;top:242.655px;font-size:5.7px;color:#383838;font-weight:normal;transform:scaleX(0.873);transform-origin:0 0;">13-30 Eng L...</div>
<svg style="left:769.2px;top:243.41px" width="7" height="7" viewBox="0 0 7 7"><circle cx="2.6" cy="2.6" r="2.1" fill="none" stroke="#16999a" stroke-width="0.95"/><path d="M4.1 4.1 L5.9 5.9" stroke="#16999a" stroke-width="1.15"/></svg>
<div style="left:8px;top:255.46px;width:33.5px;height:12.62px;background:#fff"></div>
<div style="left:41.5px;top:255.46px;width:736.1px;height:12.62px;background:#efefef"></div>
<div style="left:41.5px;top:255.46px;width:9.1px;height:12.62px;background:#e6e6e6"></div>
<div style="left:8px;top:267.38px;width:33.5px;height:0.7px;background:#eeeeee"></div>
<div style="left:41.5px;top:267.38px;width:736.1px;height:0.7px;background:#e6e6e6"></div>
<div style="left:205.5px;top:255.46px;width:0.7px;height:12.62px;background:#e6e6e6"></div>
<div style="left:405.9px;top:255.46px;width:0.7px;height:12.62px;background:#e6e6e6"></div>
<div style="left:448.7px;top:255.46px;width:0.7px;height:12.62px;background:#e6e6e6"></div>
<div style="left:501px;top:255.46px;width:0.7px;height:12.62px;background:#e6e6e6"></div>
<div style="left:537.4px;top:255.46px;width:0.7px;height:12.62px;background:#e6e6e6"></div>
<div style="left:572.5px;top:255.46px;width:0.7px;height:12.62px;background:#e6e6e6"></div>
<div style="left:623.1px;top:255.46px;width:0.7px;height:12.62px;background:#e6e6e6"></div>
<div style="left:673.8px;top:255.46px;width:0.7px;height:12.62px;background:#e6e6e6"></div>
<div style="left:734.2px;top:255.46px;width:0.7px;height:12.62px;background:#e6e6e6"></div>
<svg style="left:9.1px;top:259px" width="6" height="6" viewBox="0 0 6 6"><circle cx="2.5" cy="2.5" r="2.1" fill="none" stroke="#4f9d94" stroke-width="0.6"/></svg>
<svg style="left:17.6px;top:259px" width="6" height="6" viewBox="0 0 6 6"><path d="M0.7 0.7 L4.7 4.7 M4.7 0.7 L0.7 4.7" stroke="#a8173b" stroke-width="1.05"/></svg>
<svg style="left:23.9px;top:258.4px" width="7" height="7" viewBox="0 0 7 7"><path d="M3 0.3 V5.8 M0.2 3.05 H5.8" stroke="#2c9a8b" stroke-width="1.1"/></svg>
<svg style="left:32.3px;top:258.4px" width="7" height="6" viewBox="0 0 7 6"><path d="M2.9 0.2 L0.3 2.3 L2.9 4.4 Z" fill="#2a9f95"/><path d="M2.3 2.3 H3.9 Q6.4 2.3 6.4 5.5" stroke="#2a9f95" stroke-width="1.05" fill="none"/></svg>
<svg style="left:44px;top:258.8px" width="5" height="5" viewBox="0 0 5 5"><rect x="0" y="0" width="4.9" height="5" fill="#22a9ad"/><path d="M1.0 2.5 L2.1 3.6 L4.0 1.3" stroke="#ffffff" stroke-width="0.9" fill="none"/></svg>
<svg style="left:53px;top:258px" width="7" height="7" viewBox="0 0 7 7"><rect x="0.7" y="0.7" width="5.4" height="5.6" rx="0.4" fill="#fff" stroke="#8c8c8c" stroke-width="0.7"/><path d="M2.3 2.4 A1.3 1.3 0 1 0 4.5 2.6" stroke="#3a3a3a" stroke-width="0.75" fill="none"/></svg>
<div style="left:64.2px;top:255.46px;width:0.6px;height:12.62px;background:#e0e0e0"></div>
<div style="left:71.6px;top:255.46px;width:0.6px;height:12.62px;background:#e0e0e0"></div>
<svg style="left:75.8px;top:259.1px" width="5" height="5" viewBox="0 0 5 5"><rect x="0" y="0" width="4.9" height="4.6" rx="0.6" fill="#7c7c7c"/><path d="M1.2 2.3 H3.7" stroke="#eee" stroke-width="0.8"/><path d="M2.45 1.1 V3.5" stroke="#eee" stroke-width="0.8"/></svg>
<div style="left:59.3px;top:255.46px;width:146px;height:12.62px;overflow:hidden">
<div class="t" style="left:24.7px;top:2.595px;font-size:5.7px;color:#3c3c3c;font-weight:normal;transform:scaleX(0.801);transform-origin:0 0;text-decoration:underline;text-underline-offset:0.5px;text-decoration-thickness:0.5px;text-decoration-color:#6a6a6a">Kitchen Exhaust (Mechanical Room)</div>
</div>
<div class="t" style="left:47.3px;top:258.055px;width:400px;text-align:right;font-size:5.7px;color:#383838;font-weight:normal;transform:scaleX(0.806);transform-origin:100% 0;">1.00</div>
<div class="t" style="left:450.2px;top:258.055px;font-size:5.7px;color:#383838;font-weight:normal;transform:scaleX(0.873);transform-origin:0 0;">Each</div>
<svg style="left:484px;top:258.87px" width="6" height="6" viewBox="0 0 6 6"><circle cx="2.5" cy="2.5" r="1.9" fill="none" stroke="#333" stroke-width="0.85"/><path d="M3.8 3.8 L5.4 5.4" stroke="#333" stroke-width="1.0"/></svg>
<div class="t" style="left:170.7px;top:258.055px;width:400px;text-align:right;font-size:5.7px;color:#383838;font-weight:normal;transform:scaleX(0.806);transform-origin:100% 0;">$521.37</div>
<div class="t" style="left:221.8px;top:258.055px;width:400px;text-align:right;font-size:5.7px;color:#383838;font-weight:normal;transform:scaleX(0.806);transform-origin:100% 0;">$572.81</div>
<div class="t" style="left:272px;top:258.055px;width:400px;text-align:right;font-size:5.7px;color:#383838;font-weight:normal;transform:scaleX(0.806);transform-origin:100% 0;">$781.57</div>
<div style="left:8px;top:268.08px;width:33.5px;height:12.62px;background:#fff"></div>
<div style="left:41.5px;top:268.08px;width:736.1px;height:12.62px;background:#efefef"></div>
<div style="left:41.5px;top:268.08px;width:9.1px;height:12.62px;background:#e6e6e6"></div>
<div style="left:8px;top:280.0px;width:33.5px;height:0.7px;background:#eeeeee"></div>
<div style="left:41.5px;top:280.0px;width:736.1px;height:0.7px;background:#e6e6e6"></div>
<div style="left:205.5px;top:268.08px;width:0.7px;height:12.62px;background:#e6e6e6"></div>
<div style="left:405.9px;top:268.08px;width:0.7px;height:12.62px;background:#e6e6e6"></div>
<div style="left:448.7px;top:268.08px;width:0.7px;height:12.62px;background:#e6e6e6"></div>
<div style="left:501px;top:268.08px;width:0.7px;height:12.62px;background:#e6e6e6"></div>
<div style="left:537.4px;top:268.08px;width:0.7px;height:12.62px;background:#e6e6e6"></div>
<div style="left:572.5px;top:268.08px;width:0.7px;height:12.62px;background:#e6e6e6"></div>
<div style="left:623.1px;top:268.08px;width:0.7px;height:12.62px;background:#e6e6e6"></div>
<div style="left:673.8px;top:268.08px;width:0.7px;height:12.62px;background:#e6e6e6"></div>
<div style="left:734.2px;top:268.08px;width:0.7px;height:12.62px;background:#e6e6e6"></div>
<svg style="left:9.1px;top:272px" width="6" height="6" viewBox="0 0 6 6"><circle cx="2.5" cy="2.5" r="2.1" fill="none" stroke="#4f9d94" stroke-width="0.6"/></svg>
<svg style="left:17.6px;top:272px" width="6" height="6" viewBox="0 0 6 6"><path d="M0.7 0.7 L4.7 4.7 M4.7 0.7 L0.7 4.7" stroke="#a8173b" stroke-width="1.05"/></svg>
<svg style="left:23.9px;top:271.4px" width="7" height="7" viewBox="0 0 7 7"><path d="M3 0.3 V5.8 M0.2 3.05 H5.8" stroke="#2c9a8b" stroke-width="1.1"/></svg>
<svg style="left:32.3px;top:271.4px" width="7" height="6" viewBox="0 0 7 6"><path d="M2.9 0.2 L0.3 2.3 L2.9 4.4 Z" fill="#2a9f95"/><path d="M2.3 2.3 H3.9 Q6.4 2.3 6.4 5.5" stroke="#2a9f95" stroke-width="1.05" fill="none"/></svg>
<svg style="left:44px;top:271.8px" width="5" height="5" viewBox="0 0 5 5"><rect x="0" y="0" width="4.9" height="5" fill="#22a9ad"/><path d="M1.0 2.5 L2.1 3.6 L4.0 1.3" stroke="#ffffff" stroke-width="0.9" fill="none"/></svg>
<svg style="left:53px;top:271px" width="7" height="7" viewBox="0 0 7 7"><rect x="0.7" y="0.7" width="5.4" height="5.6" rx="0.4" fill="#fff" stroke="#8c8c8c" stroke-width="0.7"/><path d="M2.3 2.4 A1.3 1.3 0 1 0 4.5 2.6" stroke="#3a3a3a" stroke-width="0.75" fill="none"/></svg>
<div style="left:64.2px;top:268.08px;width:0.6px;height:12.62px;background:#e0e0e0"></div>
<div style="left:71.6px;top:268.08px;width:0.6px;height:12.62px;background:#e0e0e0"></div>
<svg style="left:75.8px;top:272.1px" width="5" height="5" viewBox="0 0 5 5"><rect x="0" y="0" width="4.9" height="4.6" rx="0.6" fill="#7c7c7c"/><path d="M1.2 2.3 H3.7" stroke="#eee" stroke-width="0.8"/><path d="M2.45 1.1 V3.5" stroke="#eee" stroke-width="0.8"/></svg>
<div style="left:59.3px;top:268.08px;width:146px;height:12.62px;overflow:hidden">
<div class="t" style="left:24.7px;top:2.635px;font-size:5.7px;color:#3c3c3c;font-weight:normal;transform:scaleX(0.862);transform-origin:0 0;text-decoration:underline;text-underline-offset:0.5px;text-decoration-thickness:0.5px;text-decoration-color:#6a6a6a">Kitchen Cabinetry &amp; Top Package</div>
</div>
<div class="t" style="left:47.3px;top:270.715px;width:400px;text-align:right;font-size:5.7px;color:#383838;font-weight:normal;transform:scaleX(0.806);transform-origin:100% 0;">1.00</div>
<svg style="left:484px;top:271.49px" width="6" height="6" viewBox="0 0 6 6"><circle cx="2.5" cy="2.5" r="1.9" fill="none" stroke="#333" stroke-width="0.85"/><path d="M3.8 3.8 L5.4 5.4" stroke="#333" stroke-width="1.0"/></svg>
<div class="t" style="left:170.7px;top:270.715px;width:400px;text-align:right;font-size:5.7px;color:#383838;font-weight:normal;transform:scaleX(0.806);transform-origin:100% 0;">$18,500.00</div>
<div class="t" style="left:221.8px;top:270.715px;width:400px;text-align:right;font-size:5.7px;color:#383838;font-weight:normal;transform:scaleX(0.806);transform-origin:100% 0;">$12,000.00</div>
<div class="t" style="left:272px;top:270.715px;width:400px;text-align:right;font-size:5.7px;color:#383838;font-weight:normal;transform:scaleX(0.806);transform-origin:100% 0;">$3,000.00</div>
<div style="left:8px;top:280.7px;width:33.5px;height:12.62px;background:#fff"></div>
<div style="left:41.5px;top:280.7px;width:736.1px;height:12.62px;background:#efefef"></div>
<div style="left:41.5px;top:280.7px;width:9.1px;height:12.62px;background:#e6e6e6"></div>
<div style="left:8px;top:292.62px;width:33.5px;height:0.7px;background:#eeeeee"></div>
<div style="left:41.5px;top:292.62px;width:736.1px;height:0.7px;background:#e6e6e6"></div>
<div style="left:205.5px;top:280.7px;width:0.7px;height:12.62px;background:#e6e6e6"></div>
<div style="left:405.9px;top:280.7px;width:0.7px;height:12.62px;background:#e6e6e6"></div>
<div style="left:448.7px;top:280.7px;width:0.7px;height:12.62px;background:#e6e6e6"></div>
<div style="left:501px;top:280.7px;width:0.7px;height:12.62px;background:#e6e6e6"></div>
<div style="left:537.4px;top:280.7px;width:0.7px;height:12.62px;background:#e6e6e6"></div>
<div style="left:572.5px;top:280.7px;width:0.7px;height:12.62px;background:#e6e6e6"></div>
<div style="left:623.1px;top:280.7px;width:0.7px;height:12.62px;background:#e6e6e6"></div>
<div style="left:673.8px;top:280.7px;width:0.7px;height:12.62px;background:#e6e6e6"></div>
<div style="left:734.2px;top:280.7px;width:0.7px;height:12.62px;background:#e6e6e6"></div>
<svg style="left:9.1px;top:285px" width="6" height="6" viewBox="0 0 6 6"><circle cx="2.5" cy="2.5" r="2.1" fill="none" stroke="#4f9d94" stroke-width="0.6"/></svg>
<svg style="left:17.6px;top:285px" width="6" height="6" viewBox="0 0 6 6"><path d="M0.7 0.7 L4.7 4.7 M4.7 0.7 L0.7 4.7" stroke="#a8173b" stroke-width="1.05"/></svg>
<svg style="left:23.9px;top:284.4px" width="7" height="7" viewBox="0 0 7 7"><path d="M3 0.3 V5.8 M0.2 3.05 H5.8" stroke="#2c9a8b" stroke-width="1.1"/></svg>
<svg style="left:32.3px;top:284.4px" width="7" height="6" viewBox="0 0 7 6"><path d="M2.9 0.2 L0.3 2.3 L2.9 4.4 Z" fill="#2a9f95"/><path d="M2.3 2.3 H3.9 Q6.4 2.3 6.4 5.5" stroke="#2a9f95" stroke-width="1.05" fill="none"/></svg>
<svg style="left:44px;top:284.8px" width="5" height="5" viewBox="0 0 5 5"><rect x="0" y="0" width="4.9" height="5" fill="#22a9ad"/><path d="M1.0 2.5 L2.1 3.6 L4.0 1.3" stroke="#ffffff" stroke-width="0.9" fill="none"/></svg>
<svg style="left:53px;top:284px" width="7" height="7" viewBox="0 0 7 7"><rect x="0.7" y="0.7" width="5.4" height="5.6" rx="0.4" fill="#fff" stroke="#8c8c8c" stroke-width="0.7"/><path d="M2.3 2.4 A1.3 1.3 0 1 0 4.5 2.6" stroke="#3a3a3a" stroke-width="0.75" fill="none"/></svg>
<div style="left:64.2px;top:280.7px;width:0.6px;height:12.62px;background:#e0e0e0"></div>
<div style="left:71.6px;top:280.7px;width:0.6px;height:12.62px;background:#e0e0e0"></div>
<svg style="left:75.8px;top:285.1px" width="5" height="5" viewBox="0 0 5 5"><rect x="0" y="0" width="4.9" height="4.6" rx="0.6" fill="#7c7c7c"/><path d="M1.2 2.3 H3.7" stroke="#eee" stroke-width="0.8"/></svg>
<div style="left:59.3px;top:280.7px;width:146px;height:12.62px;overflow:hidden">
<div class="t" style="left:24.7px;top:2.675px;font-size:5.7px;color:#3c3c3c;font-weight:normal;transform:scaleX(0.837);transform-origin:0 0;text-decoration:underline;text-underline-offset:0.5px;text-decoration-thickness:0.5px;text-decoration-color:#6a6a6a">Kitchen Backsplash Tile</div>
</div>
<div class="t" style="left:47.3px;top:283.375px;width:400px;text-align:right;font-size:5.7px;color:#383838;font-weight:normal;transform:scaleX(0.806);transform-origin:100% 0;">1.00</div>
<div class="t" style="left:450.2px;top:283.375px;font-size:5.7px;color:#383838;font-weight:normal;transform:scaleX(0.873);transform-origin:0 0;">Price</div>
<svg style="left:484px;top:284.11px" width="6" height="6" viewBox="0 0 6 6"><circle cx="2.5" cy="2.5" r="1.9" fill="none" stroke="#333" stroke-width="0.85"/><path d="M3.8 3.8 L5.4 5.4" stroke="#333" stroke-width="1.0"/></svg>
<div class="t" style="left:170.7px;top:283.375px;width:400px;text-align:right;font-size:5.7px;color:#383838;font-weight:normal;transform:scaleX(0.806);transform-origin:100% 0;">$1,387.24</div>
<div class="t" style="left:221.8px;top:283.375px;width:400px;text-align:right;font-size:5.7px;color:#383838;font-weight:normal;transform:scaleX(0.806);transform-origin:100% 0;">$783.50</div>
<div class="t" style="left:272px;top:283.375px;width:400px;text-align:right;font-size:5.7px;color:#383838;font-weight:normal;transform:scaleX(0.806);transform-origin:100% 0;">$1,577.43</div>
<div style="left:8px;top:293.32px;width:33.5px;height:12.62px;background:#fff"></div>
<div style="left:41.5px;top:293.32px;width:736.1px;height:12.62px;background:#ffffff"></div>
<div style="left:41.5px;top:293.32px;width:9.1px;height:12.62px;background:#f2f2f2"></div>
<div style="left:8px;top:305.24px;width:33.5px;height:0.7px;background:#eeeeee"></div>
<div style="left:41.5px;top:305.24px;width:736.1px;height:0.7px;background:#e6e6e6"></div>
<div style="left:205.5px;top:293.32px;width:0.7px;height:12.62px;background:#e6e6e6"></div>
<div style="left:405.9px;top:293.32px;width:0.7px;height:12.62px;background:#e6e6e6"></div>
<div style="left:448.7px;top:293.32px;width:0.7px;height:12.62px;background:#e6e6e6"></div>
<div style="left:501px;top:293.32px;width:0.7px;height:12.62px;background:#e6e6e6"></div>
<div style="left:537.4px;top:293.32px;width:0.7px;height:12.62px;background:#e6e6e6"></div>
<div style="left:572.5px;top:293.32px;width:0.7px;height:12.62px;background:#e6e6e6"></div>
<div style="left:623.1px;top:293.32px;width:0.7px;height:12.62px;background:#e6e6e6"></div>
<div style="left:673.8px;top:293.32px;width:0.7px;height:12.62px;background:#e6e6e6"></div>
<div style="left:734.2px;top:293.32px;width:0.7px;height:12.62px;background:#e6e6e6"></div>
<svg style="left:9.1px;top:297px" width="6" height="6" viewBox="0 0 6 6"><circle cx="2.5" cy="2.5" r="2.1" fill="none" stroke="#4f9d94" stroke-width="0.6"/></svg>
<svg style="left:17.6px;top:297px" width="6" height="6" viewBox="0 0 6 6"><path d="M0.7 0.7 L4.7 4.7 M4.7 0.7 L0.7 4.7" stroke="#a8173b" stroke-width="1.05"/></svg>
<svg style="left:23.9px;top:296.4px" width="7" height="7" viewBox="0 0 7 7"><path d="M3 0.3 V5.8 M0.2 3.05 H5.8" stroke="#2c9a8b" stroke-width="1.1"/></svg>
<svg style="left:32.3px;top:296.4px" width="7" height="6" viewBox="0 0 7 6"><path d="M2.9 0.2 L0.3 2.3 L2.9 4.4 Z" fill="#2a9f95"/><path d="M2.3 2.3 H3.9 Q6.4 2.3 6.4 5.5" stroke="#2a9f95" stroke-width="1.05" fill="none"/></svg>
<svg style="left:44px;top:296.8px" width="5" height="5" viewBox="0 0 5 5"><rect x="0" y="0" width="4.9" height="5" fill="#22a9ad"/><path d="M1.0 2.5 L2.1 3.6 L4.0 1.3" stroke="#ffffff" stroke-width="0.9" fill="none"/></svg>
<svg style="left:53px;top:296px" width="7" height="7" viewBox="0 0 7 7"><rect x="0.7" y="0.7" width="5.4" height="5.6" rx="0.4" fill="#fff" stroke="#8c8c8c" stroke-width="0.7"/><path d="M2.3 2.4 A1.3 1.3 0 1 0 4.5 2.6" stroke="#3a3a3a" stroke-width="0.75" fill="none"/></svg>
<div style="left:64.2px;top:293.32px;width:0.6px;height:12.62px;background:#e0e0e0"></div>
<div style="left:71.6px;top:293.32px;width:0.6px;height:12.62px;background:#e0e0e0"></div>
<div style="left:78.4px;top:293.32px;width:0.6px;height:12.62px;background:#e6e6e6"></div>
<div style="left:84px;top:299.63px;width:5.5px;height:0.6px;background:#e6e6e6"></div>
<div style="left:59.3px;top:293.32px;width:146px;height:12.62px;overflow:hidden">
<div class="t" style="left:31.9px;top:2.715px;font-size:5.7px;color:#3c3c3c;font-weight:normal;transform:scaleX(0.871);transform-origin:0 0;text-decoration:underline;text-underline-offset:0.5px;text-decoration-thickness:0.5px;text-decoration-color:#6a6a6a">Pasha Soho - 4" X 16" - Matt White Wall</div>
</div>
<div class="t" style="left:207px;top:296.035px;font-size:5.7px;color:#383838;font-weight:normal;transform:scaleX(0.871);transform-origin:0 0;">Pasha Soho - 4" X 16" - Matt White Wall</div>
<div class="t" style="left:47.3px;top:296.035px;width:400px;text-align:right;font-size:5.7px;color:#383838;font-weight:normal;transform:scaleX(0.806);transform-origin:100% 0;">45.00</div>
<div class="t" style="left:450.2px;top:296.035px;font-size:5.7px;color:#383838;font-weight:normal;transform:scaleX(0.873);transform-origin:0 0;">SqFt</div>
<svg style="left:484px;top:296.73px" width="6" height="6" viewBox="0 0 6 6"><circle cx="2.5" cy="2.5" r="1.9" fill="none" stroke="#333" stroke-width="0.85"/><path d="M3.8 3.8 L5.4 5.4" stroke="#333" stroke-width="1.0"/></svg>
<svg style="left:494.1px;top:297.13px" width="5" height="5" viewBox="0 0 5 5"><rect x="0" y="0" width="5" height="5" fill="#22a9ad"/><path d="M1.0 2.5 L2.1 3.6 L4.0 1.3" stroke="#ffffff" stroke-width="0.9" fill="none"/></svg>
<div class="t" style="left:135.6px;top:296.035px;width:400px;text-align:right;font-size:5.7px;color:#383838;font-weight:normal;transform:scaleX(0.806);transform-origin:100% 0;">$6.30</div>
<div class="t" style="left:170.7px;top:296.035px;width:400px;text-align:right;font-size:5.7px;color:#383838;font-weight:normal;transform:scaleX(0.806);transform-origin:100% 0;">$7.80</div>
<div class="t" style="left:221.8px;top:296.035px;width:400px;text-align:right;font-size:5.7px;color:#383838;font-weight:normal;transform:scaleX(0.806);transform-origin:100% 0;">$283.50</div>
<div class="t" style="left:272px;top:296.035px;width:400px;text-align:right;font-size:5.7px;color:#383838;font-weight:normal;transform:scaleX(0.806);transform-origin:100% 0;">$351.00</div>
<div class="t" style="left:675.5px;top:296.035px;font-size:5.7px;color:#383838;font-weight:normal;transform:scaleX(0.873);transform-origin:0 0;">11 sf. per box</div>
<div class="t" style="left:736.5px;top:296.035px;font-size:5.7px;color:#383838;font-weight:normal;transform:scaleX(0.873);transform-origin:0 0;">14-30 Tile M...</div>
<svg style="left:769.2px;top:296.63px" width="7" height="7" viewBox="0 0 7 7"><circle cx="2.6" cy="2.6" r="2.1" fill="none" stroke="#16999a" stroke-width="0.95"/><path d="M4.1 4.1 L5.9 5.9" stroke="#16999a" stroke-width="1.15"/></svg>
<div style="left:8px;top:305.94px;width:33.5px;height:12.62px;background:#fff"></div>
<div style="left:41.5px;top:305.94px;width:736.1px;height:12.62px;background:#ffffff"></div>
<div style="left:41.5px;top:305.94px;width:9.1px;height:12.62px;background:#f2f2f2"></div>
<div style="left:8px;top:317.86px;width:33.5px;height:0.7px;background:#eeeeee"></div>
<div style="left:41.5px;top:317.86px;width:736.1px;height:0.7px;background:#e6e6e6"></div>
<div style="left:205.5px;top:305.94px;width:0.7px;height:12.62px;background:#e6e6e6"></div>
<div style="left:405.9px;top:305.94px;width:0.7px;height:12.62px;background:#e6e6e6"></div>
<div style="left:448.7px;top:305.94px;width:0.7px;height:12.62px;background:#e6e6e6"></div>
<div style="left:501px;top:305.94px;width:0.7px;height:12.62px;background:#e6e6e6"></div>
<div style="left:537.4px;top:305.94px;width:0.7px;height:12.62px;background:#e6e6e6"></div>
<div style="left:572.5px;top:305.94px;width:0.7px;height:12.62px;background:#e6e6e6"></div>
<div style="left:623.1px;top:305.94px;width:0.7px;height:12.62px;background:#e6e6e6"></div>
<div style="left:673.8px;top:305.94px;width:0.7px;height:12.62px;background:#e6e6e6"></div>
<div style="left:734.2px;top:305.94px;width:0.7px;height:12.62px;background:#e6e6e6"></div>
<svg style="left:9.1px;top:310px" width="6" height="6" viewBox="0 0 6 6"><circle cx="2.5" cy="2.5" r="2.1" fill="none" stroke="#4f9d94" stroke-width="0.6"/></svg>
<svg style="left:17.6px;top:310px" width="6" height="6" viewBox="0 0 6 6"><path d="M0.7 0.7 L4.7 4.7 M4.7 0.7 L0.7 4.7" stroke="#a8173b" stroke-width="1.05"/></svg>
<svg style="left:23.9px;top:309.4px" width="7" height="7" viewBox="0 0 7 7"><path d="M3 0.3 V5.8 M0.2 3.05 H5.8" stroke="#2c9a8b" stroke-width="1.1"/></svg>
<svg style="left:32.3px;top:309.4px" width="7" height="6" viewBox="0 0 7 6"><path d="M2.9 0.2 L0.3 2.3 L2.9 4.4 Z" fill="#2a9f95"/><path d="M2.3 2.3 H3.9 Q6.4 2.3 6.4 5.5" stroke="#2a9f95" stroke-width="1.05" fill="none"/></svg>
<svg style="left:44px;top:309.8px" width="5" height="5" viewBox="0 0 5 5"><rect x="0" y="0" width="4.9" height="5" fill="#22a9ad"/><path d="M1.0 2.5 L2.1 3.6 L4.0 1.3" stroke="#ffffff" stroke-width="0.9" fill="none"/></svg>
<svg style="left:53px;top:309px" width="7" height="7" viewBox="0 0 7 7"><rect x="0.7" y="0.7" width="5.4" height="5.6" rx="0.4" fill="#fff" stroke="#8c8c8c" stroke-width="0.7"/><path d="M2.3 2.4 A1.3 1.3 0 1 0 4.5 2.6" stroke="#3a3a3a" stroke-width="0.75" fill="none"/></svg>
<div style="left:64.2px;top:305.94px;width:0.6px;height:12.62px;background:#e0e0e0"></div>
<div style="left:71.6px;top:305.94px;width:0.6px;height:12.62px;background:#e0e0e0"></div>
<div style="left:78.4px;top:305.94px;width:0.6px;height:12.62px;background:#e6e6e6"></div>
<div style="left:84px;top:312.25px;width:5.5px;height:0.6px;background:#e6e6e6"></div>
<div style="left:59.3px;top:305.94px;width:146px;height:12.62px;overflow:hidden">
<div class="t" style="left:31.9px;top:2.755px;font-size:5.7px;color:#3c3c3c;font-weight:normal;transform:scaleX(0.875);transform-origin:0 0;text-decoration:underline;text-underline-offset:0.5px;text-decoration-thickness:0.5px;text-decoration-color:#6a6a6a">Backsplash installation - Large 31 to 40 sqft</div>
</div>
<div class="t" style="left:207px;top:308.695px;font-size:5.7px;color:#383838;font-weight:normal;transform:scaleX(0.871);transform-origin:0 0;">Standard Backsplash Installation: including adhesive.</div>
<div class="t" style="left:47.3px;top:308.695px;width:400px;text-align:right;font-size:5.7px;color:#383838;font-weight:normal;transform:scaleX(0.806);transform-origin:100% 0;">1.00</div>
<div class="t" style="left:450.2px;top:308.695px;font-size:5.7px;color:#383838;font-weight:normal;transform:scaleX(0.873);transform-origin:0 0;">Each</div>
<svg style="left:484px;top:309.35px" width="6" height="6" viewBox="0 0 6 6"><circle cx="2.5" cy="2.5" r="1.9" fill="none" stroke="#333" stroke-width="0.85"/><path d="M3.8 3.8 L5.4 5.4" stroke="#333" stroke-width="1.0"/></svg>
<svg style="left:494.1px;top:309.75px" width="5" height="5" viewBox="0 0 5 5"><rect x="0" y="0" width="5" height="5" fill="#22a9ad"/><path d="M1.0 2.5 L2.1 3.6 L4.0 1.3" stroke="#ffffff" stroke-width="0.9" fill="none"/></svg>
<div class="t" style="left:135.6px;top:308.695px;width:400px;text-align:right;font-size:5.7px;color:#383838;font-weight:normal;transform:scaleX(0.806);transform-origin:100% 0;">$500.00</div>
<div class="t" style="left:170.7px;top:308.695px;width:400px;text-align:right;font-size:5.7px;color:#383838;font-weight:normal;transform:scaleX(0.806);transform-origin:100% 0;">$625.00</div>
<div class="t" style="left:221.8px;top:308.695px;width:400px;text-align:right;font-size:5.7px;color:#383838;font-weight:normal;transform:scaleX(0.806);transform-origin:100% 0;">$500.00</div>
<div class="t" style="left:272px;top:308.695px;width:400px;text-align:right;font-size:5.7px;color:#383838;font-weight:normal;transform:scaleX(0.806);transform-origin:100% 0;">$1,226.43</div>
<div class="t" style="left:736.5px;top:308.695px;font-size:5.7px;color:#383838;font-weight:normal;transform:scaleX(0.873);transform-origin:0 0;">14-50 Tile S...</div>
<svg style="left:769.2px;top:309.25px" width="7" height="7" viewBox="0 0 7 7"><circle cx="2.6" cy="2.6" r="2.1" fill="none" stroke="#16999a" stroke-width="0.95"/><path d="M4.1 4.1 L5.9 5.9" stroke="#16999a" stroke-width="1.15"/></svg>
<div style="left:8px;top:318.56px;width:33.5px;height:12.62px;background:#fff"></div>
<div style="left:41.5px;top:318.56px;width:736.1px;height:12.62px;background:#efefef"></div>
<div style="left:41.5px;top:318.56px;width:9.1px;height:12.62px;background:#e6e6e6"></div>
<div style="left:8px;top:330.48px;width:33.5px;height:0.7px;background:#eeeeee"></div>
<div style="left:41.5px;top:330.48px;width:736.1px;height:0.7px;background:#e6e6e6"></div>
<div style="left:205.5px;top:318.56px;width:0.7px;height:12.62px;background:#e6e6e6"></div>
<div style="left:405.9px;top:318.56px;width:0.7px;height:12.62px;background:#e6e6e6"></div>
<div style="left:448.7px;top:318.56px;width:0.7px;height:12.62px;background:#e6e6e6"></div>
<div style="left:501px;top:318.56px;width:0.7px;height:12.62px;background:#e6e6e6"></div>
<div style="left:537.4px;top:318.56px;width:0.7px;height:12.62px;background:#e6e6e6"></div>
<div style="left:572.5px;top:318.56px;width:0.7px;height:12.62px;background:#e6e6e6"></div>
<div style="left:623.1px;top:318.56px;width:0.7px;height:12.62px;background:#e6e6e6"></div>
<div style="left:673.8px;top:318.56px;width:0.7px;height:12.62px;background:#e6e6e6"></div>
<div style="left:734.2px;top:318.56px;width:0.7px;height:12.62px;background:#e6e6e6"></div>
<svg style="left:9.1px;top:322px" width="6" height="6" viewBox="0 0 6 6"><circle cx="2.5" cy="2.5" r="2.1" fill="none" stroke="#4f9d94" stroke-width="0.6"/></svg>
<svg style="left:17.6px;top:322px" width="6" height="6" viewBox="0 0 6 6"><path d="M0.7 0.7 L4.7 4.7 M4.7 0.7 L0.7 4.7" stroke="#a8173b" stroke-width="1.05"/></svg>
<svg style="left:23.9px;top:321.4px" width="7" height="7" viewBox="0 0 7 7"><path d="M3 0.3 V5.8 M0.2 3.05 H5.8" stroke="#2c9a8b" stroke-width="1.1"/></svg>
<svg style="left:32.3px;top:321.4px" width="7" height="6" viewBox="0 0 7 6"><path d="M2.9 0.2 L0.3 2.3 L2.9 4.4 Z" fill="#2a9f95"/><path d="M2.3 2.3 H3.9 Q6.4 2.3 6.4 5.5" stroke="#2a9f95" stroke-width="1.05" fill="none"/></svg>
<svg style="left:44px;top:321.8px" width="5" height="5" viewBox="0 0 5 5"><rect x="0" y="0" width="4.9" height="5" fill="#22a9ad"/><path d="M1.0 2.5 L2.1 3.6 L4.0 1.3" stroke="#ffffff" stroke-width="0.9" fill="none"/></svg>
<svg style="left:53px;top:321px" width="7" height="7" viewBox="0 0 7 7"><rect x="0.7" y="0.7" width="5.4" height="5.6" rx="0.4" fill="#fff" stroke="#8c8c8c" stroke-width="0.7"/><path d="M2.3 2.4 A1.3 1.3 0 1 0 4.5 2.6" stroke="#3a3a3a" stroke-width="0.75" fill="none"/></svg>
<div style="left:64.2px;top:318.56px;width:0.6px;height:12.62px;background:#e0e0e0"></div>
<div style="left:71.6px;top:318.56px;width:0.6px;height:12.62px;background:#e0e0e0"></div>
<svg style="left:75.8px;top:322.1px" width="5" height="5" viewBox="0 0 5 5"><rect x="0" y="0" width="4.9" height="4.6" rx="0.6" fill="#7c7c7c"/><path d="M1.2 2.3 H3.7" stroke="#eee" stroke-width="0.8"/><path d="M2.45 1.1 V3.5" stroke="#eee" stroke-width="0.8"/></svg>
<div style="left:59.3px;top:318.56px;width:146px;height:12.62px;overflow:hidden">
<div class="t" style="left:24.7px;top:2.795px;font-size:5.7px;color:#3c3c3c;font-weight:normal;transform:scaleX(0.812);transform-origin:0 0;text-decoration:underline;text-underline-offset:0.5px;text-decoration-thickness:0.5px;text-decoration-color:#6a6a6a">Kitchen Sink</div>
</div>
<div class="t" style="left:47.3px;top:321.355px;width:400px;text-align:right;font-size:5.7px;color:#383838;font-weight:normal;transform:scaleX(0.806);transform-origin:100% 0;">1.00</div>
<div class="t" style="left:450.2px;top:321.355px;font-size:5.7px;color:#383838;font-weight:normal;transform:scaleX(0.873);transform-origin:0 0;">Each</div>
<svg style="left:484px;top:321.97px" width="6" height="6" viewBox="0 0 6 6"><circle cx="2.5" cy="2.5" r="1.9" fill="none" stroke="#333" stroke-width="0.85"/><path d="M3.8 3.8 L5.4 5.4" stroke="#333" stroke-width="1.0"/></svg>
<div class="t" style="left:170.7px;top:321.355px;width:400px;text-align:right;font-size:5.7px;color:#383838;font-weight:normal;transform:scaleX(0.806);transform-origin:100% 0;">$809.90</div>
<div class="t" style="left:221.8px;top:321.355px;width:400px;text-align:right;font-size:5.7px;color:#383838;font-weight:normal;transform:scaleX(0.806);transform-origin:100% 0;">$623.00</div>
<div class="t" style="left:272px;top:321.355px;width:400px;text-align:right;font-size:5.7px;color:#383838;font-weight:normal;transform:scaleX(0.806);transform-origin:100% 0;">$809.90</div>
<div style="left:8px;top:331.18px;width:33.5px;height:12.62px;background:#fff"></div>
<div style="left:41.5px;top:331.18px;width:736.1px;height:12.62px;background:#efefef"></div>
<div style="left:41.5px;top:331.18px;width:9.1px;height:12.62px;background:#e6e6e6"></div>
<div style="left:8px;top:343.1px;width:33.5px;height:0.7px;background:#eeeeee"></div>
<div style="left:41.5px;top:343.1px;width:736.1px;height:0.7px;background:#e6e6e6"></div>
<div style="left:205.5px;top:331.18px;width:0.7px;height:12.62px;background:#e6e6e6"></div>
<div style="left:405.9px;top:331.18px;width:0.7px;height:12.62px;background:#e6e6e6"></div>
<div style="left:448.7px;top:331.18px;width:0.7px;height:12.62px;background:#e6e6e6"></div>
<div style="left:501px;top:331.18px;width:0.7px;height:12.62px;background:#e6e6e6"></div>
<div style="left:537.4px;top:331.18px;width:0.7px;height:12.62px;background:#e6e6e6"></div>
<div style="left:572.5px;top:331.18px;width:0.7px;height:12.62px;background:#e6e6e6"></div>
<div style="left:623.1px;top:331.18px;width:0.7px;height:12.62px;background:#e6e6e6"></div>
<div style="left:673.8px;top:331.18px;width:0.7px;height:12.62px;background:#e6e6e6"></div>
<div style="left:734.2px;top:331.18px;width:0.7px;height:12.62px;background:#e6e6e6"></div>
<svg style="left:9.1px;top:335px" width="6" height="6" viewBox="0 0 6 6"><circle cx="2.5" cy="2.5" r="2.1" fill="none" stroke="#4f9d94" stroke-width="0.6"/></svg>
<svg style="left:17.6px;top:335px" width="6" height="6" viewBox="0 0 6 6"><path d="M0.7 0.7 L4.7 4.7 M4.7 0.7 L0.7 4.7" stroke="#a8173b" stroke-width="1.05"/></svg>
<svg style="left:23.9px;top:334.4px" width="7" height="7" viewBox="0 0 7 7"><path d="M3 0.3 V5.8 M0.2 3.05 H5.8" stroke="#2c9a8b" stroke-width="1.1"/></svg>
<svg style="left:32.3px;top:334.4px" width="7" height="6" viewBox="0 0 7 6"><path d="M2.9 0.2 L0.3 2.3 L2.9 4.4 Z" fill="#2a9f95"/><path d="M2.3 2.3 H3.9 Q6.4 2.3 6.4 5.5" stroke="#2a9f95" stroke-width="1.05" fill="none"/></svg>
<svg style="left:44px;top:334.8px" width="5" height="5" viewBox="0 0 5 5"><rect x="0" y="0" width="4.9" height="5" fill="#22a9ad"/><path d="M1.0 2.5 L2.1 3.6 L4.0 1.3" stroke="#ffffff" stroke-width="0.9" fill="none"/></svg>
<svg style="left:53px;top:334px" width="7" height="7" viewBox="0 0 7 7"><rect x="0.7" y="0.7" width="5.4" height="5.6" rx="0.4" fill="#fff" stroke="#8c8c8c" stroke-width="0.7"/><path d="M2.3 2.4 A1.3 1.3 0 1 0 4.5 2.6" stroke="#3a3a3a" stroke-width="0.75" fill="none"/></svg>
<div style="left:64.2px;top:331.18px;width:0.6px;height:12.62px;background:#e0e0e0"></div>
<div style="left:71.6px;top:331.18px;width:0.6px;height:12.62px;background:#e0e0e0"></div>
<svg style="left:75.8px;top:335.1px" width="5" height="5" viewBox="0 0 5 5"><rect x="0" y="0" width="4.9" height="4.6" rx="0.6" fill="#7c7c7c"/><path d="M1.2 2.3 H3.7" stroke="#eee" stroke-width="0.8"/><path d="M2.45 1.1 V3.5" stroke="#eee" stroke-width="0.8"/></svg>
<div style="left:59.3px;top:331.18px;width:146px;height:12.62px;overflow:hidden">
<div class="t" style="left:24.7px;top:2.835px;font-size:5.7px;color:#3c3c3c;font-weight:normal;transform:scaleX(0.829);transform-origin:0 0;text-decoration:underline;text-underline-offset:0.5px;text-decoration-thickness:0.5px;text-decoration-color:#6a6a6a">Kitchen Faucet</div>
</div>
<div class="t" style="left:47.3px;top:334.015px;width:400px;text-align:right;font-size:5.7px;color:#383838;font-weight:normal;transform:scaleX(0.806);transform-origin:100% 0;">1.00</div>
<div class="t" style="left:450.2px;top:334.015px;font-size:5.7px;color:#383838;font-weight:normal;transform:scaleX(0.873);transform-origin:0 0;">Package</div>
<svg style="left:484px;top:334.59px" width="6" height="6" viewBox="0 0 6 6"><circle cx="2.5" cy="2.5" r="1.9" fill="none" stroke="#333" stroke-width="0.85"/><path d="M3.8 3.8 L5.4 5.4" stroke="#333" stroke-width="1.0"/></svg>
<div class="t" style="left:170.7px;top:334.015px;width:400px;text-align:right;font-size:5.7px;color:#383838;font-weight:normal;transform:scaleX(0.806);transform-origin:100% 0;">$714.35</div>
<div class="t" style="left:221.8px;top:334.015px;width:400px;text-align:right;font-size:5.7px;color:#383838;font-weight:normal;transform:scaleX(0.806);transform-origin:100% 0;">$436.72</div>
<div class="t" style="left:272px;top:334.015px;width:400px;text-align:right;font-size:5.7px;color:#383838;font-weight:normal;transform:scaleX(0.806);transform-origin:100% 0;">$579.62</div>
<div style="left:8px;top:343.8px;width:33.5px;height:12.62px;background:#fff"></div>
<div style="left:41.5px;top:343.8px;width:736.1px;height:12.62px;background:#efefef"></div>
<div style="left:41.5px;top:343.8px;width:9.1px;height:12.62px;background:#e6e6e6"></div>
<div style="left:8px;top:355.72px;width:33.5px;height:0.7px;background:#eeeeee"></div>
<div style="left:41.5px;top:355.72px;width:736.1px;height:0.7px;background:#e6e6e6"></div>
<div style="left:205.5px;top:343.8px;width:0.7px;height:12.62px;background:#e6e6e6"></div>
<div style="left:405.9px;top:343.8px;width:0.7px;height:12.62px;background:#e6e6e6"></div>
<div style="left:448.7px;top:343.8px;width:0.7px;height:12.62px;background:#e6e6e6"></div>
<div style="left:501px;top:343.8px;width:0.7px;height:12.62px;background:#e6e6e6"></div>
<div style="left:537.4px;top:343.8px;width:0.7px;height:12.62px;background:#e6e6e6"></div>
<div style="left:572.5px;top:343.8px;width:0.7px;height:12.62px;background:#e6e6e6"></div>
<div style="left:623.1px;top:343.8px;width:0.7px;height:12.62px;background:#e6e6e6"></div>
<div style="left:673.8px;top:343.8px;width:0.7px;height:12.62px;background:#e6e6e6"></div>
<div style="left:734.2px;top:343.8px;width:0.7px;height:12.62px;background:#e6e6e6"></div>
<svg style="left:9.1px;top:348px" width="6" height="6" viewBox="0 0 6 6"><circle cx="2.5" cy="2.5" r="2.1" fill="none" stroke="#4f9d94" stroke-width="0.6"/></svg>
<svg style="left:17.6px;top:348px" width="6" height="6" viewBox="0 0 6 6"><path d="M0.7 0.7 L4.7 4.7 M4.7 0.7 L0.7 4.7" stroke="#a8173b" stroke-width="1.05"/></svg>
<svg style="left:23.9px;top:347.4px" width="7" height="7" viewBox="0 0 7 7"><path d="M3 0.3 V5.8 M0.2 3.05 H5.8" stroke="#2c9a8b" stroke-width="1.1"/></svg>
<svg style="left:32.3px;top:347.4px" width="7" height="6" viewBox="0 0 7 6"><path d="M2.9 0.2 L0.3 2.3 L2.9 4.4 Z" fill="#2a9f95"/><path d="M2.3 2.3 H3.9 Q6.4 2.3 6.4 5.5" stroke="#2a9f95" stroke-width="1.05" fill="none"/></svg>
<svg style="left:44px;top:347.8px" width="5" height="5" viewBox="0 0 5 5"><rect x="0" y="0" width="4.9" height="5" fill="#22a9ad"/><path d="M1.0 2.5 L2.1 3.6 L4.0 1.3" stroke="#ffffff" stroke-width="0.9" fill="none"/></svg>
<svg style="left:53px;top:347px" width="7" height="7" viewBox="0 0 7 7"><rect x="0.7" y="0.7" width="5.4" height="5.6" rx="0.4" fill="#fff" stroke="#8c8c8c" stroke-width="0.7"/><path d="M2.3 2.4 A1.3 1.3 0 1 0 4.5 2.6" stroke="#3a3a3a" stroke-width="0.75" fill="none"/></svg>
<div style="left:64.2px;top:343.8px;width:0.6px;height:12.62px;background:#e0e0e0"></div>
<div style="left:71.6px;top:343.8px;width:0.6px;height:12.62px;background:#e0e0e0"></div>
<svg style="left:75.8px;top:348.1px" width="5" height="5" viewBox="0 0 5 5"><rect x="0" y="0" width="4.9" height="4.6" rx="0.6" fill="#7c7c7c"/><path d="M1.2 2.3 H3.7" stroke="#eee" stroke-width="0.8"/><path d="M2.45 1.1 V3.5" stroke="#eee" stroke-width="0.8"/></svg>
<div style="left:59.3px;top:343.8px;width:146px;height:12.62px;overflow:hidden">
<div class="t" style="left:24.7px;top:2.875px;font-size:5.7px;color:#3c3c3c;font-weight:normal;transform:scaleX(0.867);transform-origin:0 0;text-decoration:underline;text-underline-offset:0.5px;text-decoration-thickness:0.5px;text-decoration-color:#6a6a6a">Refrigerator</div>
</div>
<div class="t" style="left:47.3px;top:346.675px;width:400px;text-align:right;font-size:5.7px;color:#383838;font-weight:normal;transform:scaleX(0.806);transform-origin:100% 0;">1.00</div>
<div class="t" style="left:450.2px;top:346.675px;font-size:5.7px;color:#383838;font-weight:normal;transform:scaleX(0.873);transform-origin:0 0;">Each</div>
<svg style="left:484px;top:347.21px" width="6" height="6" viewBox="0 0 6 6"><circle cx="2.5" cy="2.5" r="1.9" fill="none" stroke="#333" stroke-width="0.85"/><path d="M3.8 3.8 L5.4 5.4" stroke="#333" stroke-width="1.0"/></svg>
<div class="t" style="left:170.7px;top:346.675px;width:400px;text-align:right;font-size:5.7px;color:#383838;font-weight:normal;transform:scaleX(0.806);transform-origin:100% 0;">$558.00</div>
<div class="t" style="left:221.8px;top:346.675px;width:400px;text-align:right;font-size:5.7px;color:#383838;font-weight:normal;transform:scaleX(0.806);transform-origin:100% 0;">$405.00</div>
<div class="t" style="left:272px;top:346.675px;width:400px;text-align:right;font-size:5.7px;color:#383838;font-weight:normal;transform:scaleX(0.806);transform-origin:100% 0;">$556.00</div>
<div style="left:8px;top:357.6px;width:769.6px;height:1.2px;background:#3b9fb0"></div>
<div style="left:8px;top:358.8px;width:769.6px;height:32.0px;background:#fff"></div>
<div style="left:41.5px;top:358.8px;width:0.8px;height:10.4px;background:#ededed"></div>
<div style="left:50.6px;top:358.8px;width:0.8px;height:10.4px;background:#ededed"></div>
<div style="left:59.3px;top:358.8px;width:0.8px;height:10.4px;background:#ededed"></div>
<div style="left:205.5px;top:358.8px;width:0.8px;height:10.4px;background:#ededed"></div>
<div style="left:405.9px;top:358.8px;width:0.8px;height:10.4px;background:#ededed"></div>
<div style="left:448.7px;top:358.8px;width:0.8px;height:10.4px;background:#ededed"></div>
<div style="left:572.5px;top:358.8px;width:0.8px;height:10.4px;background:#ededed"></div>
<div style="left:623.1px;top:358.8px;width:0.8px;height:10.4px;background:#ededed"></div>
<div style="left:673.8px;top:358.8px;width:0.8px;height:10.4px;background:#ededed"></div>
<div style="left:734.2px;top:358.8px;width:0.8px;height:10.4px;background:#ededed"></div>
<div style="left:16.4px;top:369.2px;width:0.8px;height:10.3px;background:#ededed"></div>
<div style="left:41.5px;top:369.2px;width:0.8px;height:10.3px;background:#ededed"></div>
<div style="left:50.6px;top:369.2px;width:0.8px;height:10.3px;background:#ededed"></div>
<div style="left:59.3px;top:369.2px;width:0.8px;height:10.3px;background:#ededed"></div>
<div style="left:205.5px;top:369.2px;width:0.8px;height:10.3px;background:#ededed"></div>
<div style="left:405.9px;top:369.2px;width:0.8px;height:10.3px;background:#ededed"></div>
<div style="left:448.7px;top:369.2px;width:0.8px;height:10.3px;background:#ededed"></div>
<div style="left:572.5px;top:369.2px;width:0.8px;height:10.3px;background:#ededed"></div>
<div style="left:623.1px;top:369.2px;width:0.8px;height:10.3px;background:#ededed"></div>
<div style="left:673.8px;top:369.2px;width:0.8px;height:10.3px;background:#ededed"></div>
<div style="left:734.2px;top:369.2px;width:0.8px;height:10.3px;background:#ededed"></div>
<div style="left:16.4px;top:379.5px;width:0.8px;height:11.3px;background:#ededed"></div>
<div style="left:41.5px;top:379.5px;width:0.8px;height:11.3px;background:#ededed"></div>
<div style="left:50.6px;top:379.5px;width:0.8px;height:11.3px;background:#ededed"></div>
<div style="left:59.3px;top:379.5px;width:0.8px;height:11.3px;background:#ededed"></div>
<div style="left:205.5px;top:379.5px;width:0.8px;height:11.3px;background:#ededed"></div>
<div style="left:405.9px;top:379.5px;width:0.8px;height:11.3px;background:#ededed"></div>
<div style="left:448.7px;top:379.5px;width:0.8px;height:11.3px;background:#ededed"></div>
<div style="left:572.5px;top:379.5px;width:0.8px;height:11.3px;background:#ededed"></div>
<div style="left:623.1px;top:379.5px;width:0.8px;height:11.3px;background:#ededed"></div>
<div style="left:673.8px;top:379.5px;width:0.8px;height:11.3px;background:#ededed"></div>
<div style="left:734.2px;top:379.5px;width:0.8px;height:11.3px;background:#ededed"></div>
<div style="left:16.4px;top:369px;width:761.2px;height:0.9px;background:#e9e9e9"></div>
<div class="t" style="left:61px;top:359.925px;font-size:5.7px;color:#444;font-weight:normal;transform:scaleX(0.939);transform-origin:0 0;">Sub-total</div>
<div class="t" style="left:272px;top:359.925px;width:400px;text-align:right;font-size:5.7px;color:#383838;font-weight:normal;transform:scaleX(0.806);transform-origin:100% 0;">$41,550,309.73</div>
<div style="left:8px;top:379px;width:769.6px;height:0.9px;background:#e9e9e9"></div>
<div class="t" style="left:61px;top:370.275px;font-size:5.7px;color:#444;font-weight:normal;transform:scaleX(0.939);transform-origin:0 0;">HST 13%</div>
<div class="t" style="left:272px;top:370.275px;width:400px;text-align:right;font-size:5.7px;color:#383838;font-weight:normal;transform:scaleX(0.806);transform-origin:100% 0;">$5,383,990.12</div>
<div style="left:8px;top:390px;width:769.6px;height:0.9px;background:#e9e9e9"></div>
<div class="t" style="left:61px;top:381.075px;font-size:5.7px;color:#444;font-weight:normal;transform:scaleX(0.939);transform-origin:0 0;">Total</div>
<div class="t" style="left:272px;top:381.075px;width:400px;text-align:right;font-size:5.7px;color:#383838;font-weight:normal;transform:scaleX(0.806);transform-origin:100% 0;">$46,934,299.85</div>
<div class="t" style="left:221.8px;top:359.925px;width:400px;text-align:right;font-size:5.7px;color:#383838;font-weight:normal;transform:scaleX(0.806);transform-origin:100% 0;">$9,262,920.00</div>
<div style="left:2px;top:391.3px;width:787px;height:7.7px;background:#fafafa"></div>
<div style="left:7.2px;top:51px;width:0.8px;height:340.5px;background:#e4e4e4"></div>
<div style="left:736.2px;top:393px;width:53px;height:5.5px;background:#3a3a3a"></div>
<div class="t" style="left:739.5px;top:392.11px;font-size:4.3px;color:#ffffff;font-weight:normal;transform:scaleX(0.92);transform-origin:0 0;">Support [1.17.0.0, build 63]</div>
<div style="left:31.8px;top:236.3px;width:78.5px;height:34.2px;background:#fff;border:0.8px solid #b4b4b4;box-shadow:1px 1.5px 2px rgba(0,0,0,0.28)"></div>
<div class="t" style="left:37.1px;top:240.129px;font-size:5.4px;color:#3a3a3a;font-weight:normal;transform:scaleX(0.928);transform-origin:0 0;">Replace Item From Database</div>
<div class="t" style="left:37.1px;top:250.129px;font-size:5.4px;color:#3a3a3a;font-weight:normal;transform:scaleX(0.928);transform-origin:0 0;">Replace All From Database</div>
<div class="t" style="left:37.1px;top:260.129px;font-size:5.4px;color:#3a3a3a;font-weight:normal;transform:scaleX(0.928);transform-origin:0 0;">Replace Item By QR code</div>
<svg style="left:100.2px;top:262.1px" width="3" height="5" viewBox="0 0 3 5"><path d="M0.4 0.4 L2.1 2.2 L0.4 4" stroke="#3aa" stroke-width="0.65" fill="none"/></svg>
<svg style="left:101.5px;top:245px" width="5" height="7" viewBox="0 0 5 7"><path d="M0.4 0.4 L0.4 5.4 L1.6 4.2 L2.6 6.2 L3.4 5.8 L2.5 3.9 L4.2 3.9 Z" fill="#fff" stroke="#666" stroke-width="0.5"/></svg>
</body></html>
